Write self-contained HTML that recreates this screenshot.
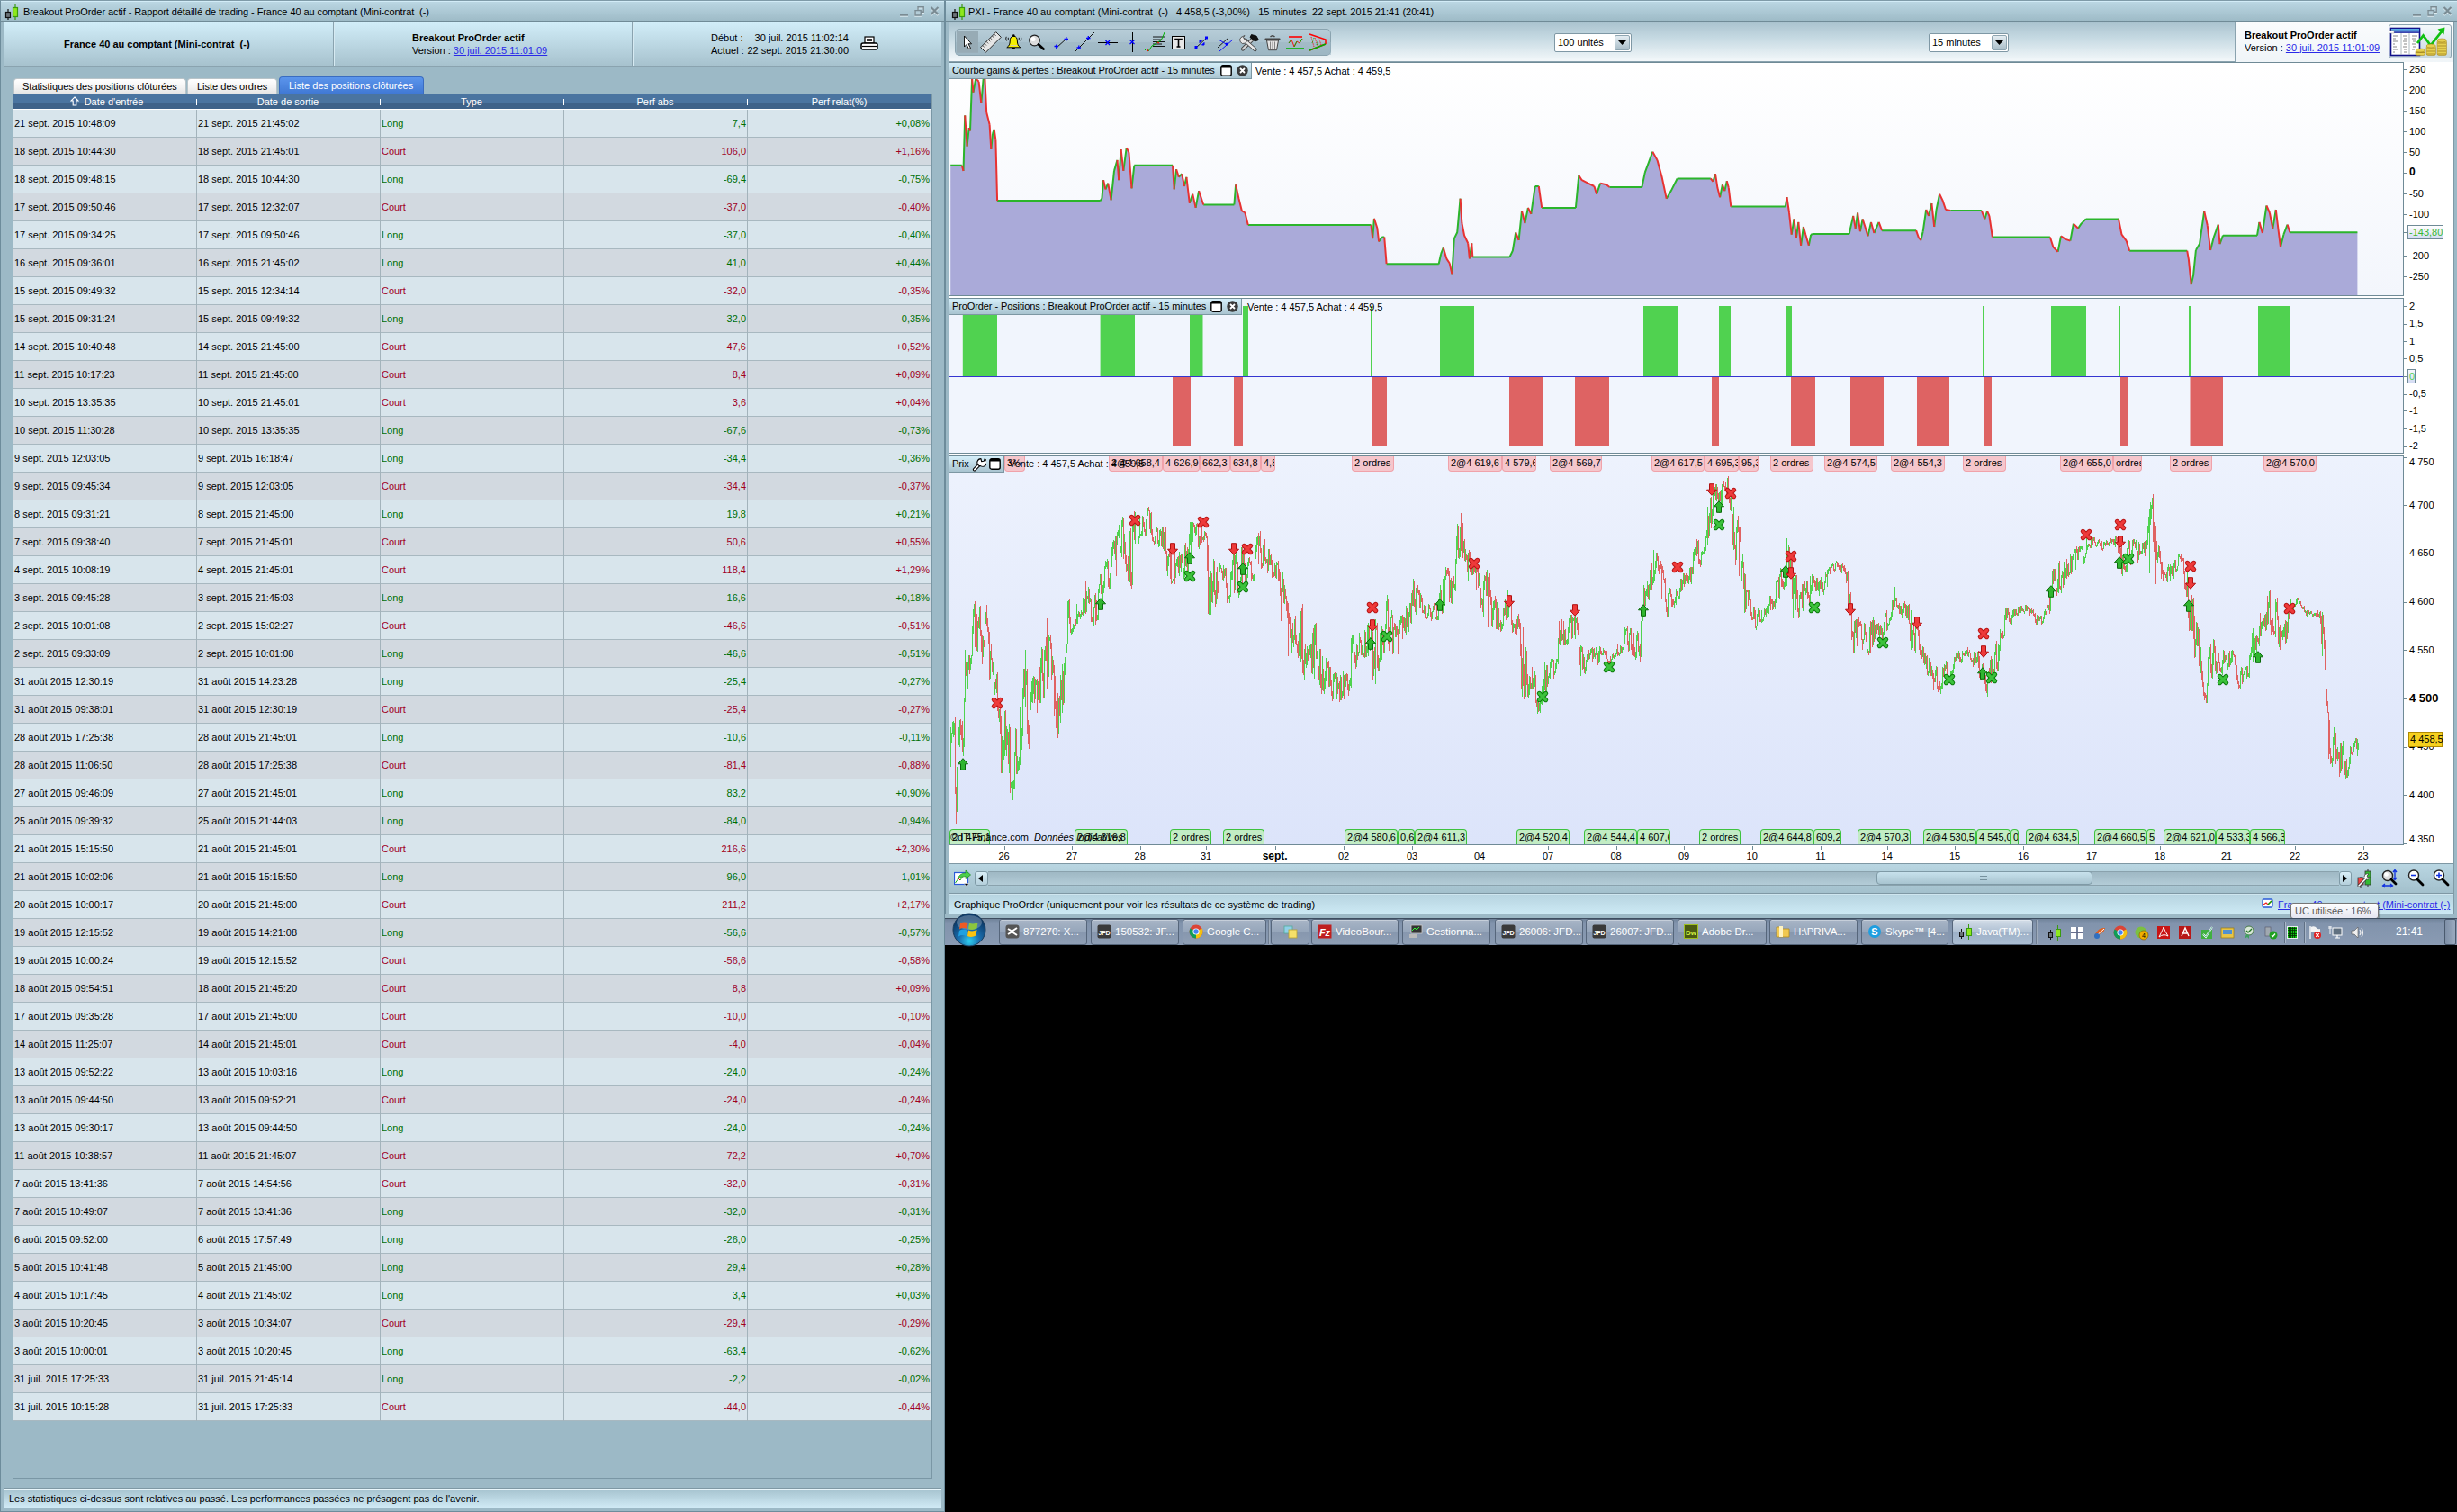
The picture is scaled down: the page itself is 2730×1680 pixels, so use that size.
<!DOCTYPE html><html><head><meta charset="utf-8"><style>*{margin:0;padding:0;box-sizing:border-box}html,body{width:2730px;height:1680px;overflow:hidden;background:#000}body{position:relative;font-family:"Liberation Sans",sans-serif;font-size:11px;color:#000}.a{position:absolute}.t{position:absolute;white-space:nowrap}.lk{color:#2a2ae8;text-decoration:underline}.tb{position:absolute;height:29px;top:1020px;border:1px solid #5d6c80;border-radius:3px;background:linear-gradient(#aab6c6,#8c9bb0 50%,#7f8fa6 51%,#8898ad);color:#fff;font-size:12px;line-height:27px;white-space:nowrap;overflow:hidden}</style></head><body>
<div class="a" style="left:0px;top:0px;width:1050px;height:1680px;background:#9cb9c6;border-left:1px solid #6d8c9b;border-right:1px solid #6d8c9b;border-top:1px solid #7f9ba8"></div>
<div class="a" style="left:1px;top:1px;width:1048px;height:22px;background:linear-gradient(#bcd8e4,#9ebbc7)"></div>
<div class="a" style="left:1px;top:1px;width:1048px;height:1px;background:#d2ecf7"></div>
<div class="a" style="left:1px;top:23px;width:1048px;height:1px;background:#708b97"></div>
<svg class="a" style="left:5px;top:5px" width="16" height="17" viewBox="0 0 16 17"><line x1="4" y1="5" x2="4" y2="17" stroke="#111" stroke-width="1.2"/><rect x="1.5" y="8.5" width="5" height="6" fill="#6b7378" stroke="#111" stroke-width="1.2"/><line x1="12" y1="0" x2="12" y2="17" stroke="#3a9a10" stroke-width="1.2"/><rect x="9.5" y="3.5" width="5" height="10" fill="#8ee81c" stroke="#3a9a10" stroke-width="1.2"/></svg>
<div class="t" style="left:26px;top:7px;line-height:13px;color:#000;letter-spacing:-0.08px">Breakout ProOrder actif - Rapport détaillé de trading - France 40 au comptant (Mini-contrat&nbsp; (-)</div>
<svg class="a" style="left:999px;top:6px" width="46" height="14" viewBox="0 0 46 14"><g transform="translate(0,1)" opacity="0.7"><rect x="1" y="9.5" width="9" height="2.2" fill="#f4fbfd"/><path d="M21 1.8 H27.2 V7.2 H21Z" fill="none" stroke="#f4fbfd" stroke-width="1.4"/><path d="M18 5.6 H24.2 V11 H18Z" fill="#b4cdd8" stroke="#f4fbfd" stroke-width="1.4"/><path d="M35.5 2 L43.5 10 M43.5 2 L35.5 10" stroke="#f4fbfd" stroke-width="2.2"/></g><rect x="1" y="9.5" width="9" height="2.2" fill="#7a8b93"/><path d="M21 1.8 H27.2 V7.2 H21Z" fill="none" stroke="#7a8b93" stroke-width="1.4"/><path d="M18 5.6 H24.2 V11 H18Z" fill="#b4cdd8" stroke="#7a8b93" stroke-width="1.4"/><path d="M35.5 2 L43.5 10 M43.5 2 L35.5 10" stroke="#7a8b93" stroke-width="2.2"/></svg>
<div class="a" style="left:4px;top:24px;width:1042px;height:50px;background:linear-gradient(#d2eef9,#a6c1cd)"></div>
<div class="a" style="left:4px;top:73px;width:1042px;height:1px;background:#8aa3af"></div>
<div class="a" style="left:4px;top:74px;width:1042px;height:1px;background:#d6eaf2"></div>
<div class="a" style="left:370px;top:24px;width:1px;height:49px;background:#8aa3af"></div>
<div class="a" style="left:371px;top:24px;width:1px;height:49px;background:#d6eaf2"></div>
<div class="a" style="left:702px;top:24px;width:1px;height:49px;background:#8aa3af"></div>
<div class="a" style="left:703px;top:24px;width:1px;height:49px;background:#d6eaf2"></div>
<div class="t" style="left:71px;top:43px;line-height:13px;font-weight:bold">France 40 au comptant (Mini-contrat&nbsp; (-)</div>
<div class="t" style="left:458px;top:36px;line-height:13px;font-weight:bold">Breakout ProOrder actif</div>
<div class="t" style="left:458px;top:50px;line-height:13px;">Version : <span class="lk">30 juil. 2015 11:01:09</span></div>
<div class="t" style="left:790px;top:36px;line-height:13px;">Début :</div>
<div class="t" style="right:1787px;top:36px;line-height:13px;">30 juil. 2015 11:02:14</div>
<div class="t" style="left:790px;top:50px;line-height:13px;">Actuel :</div>
<div class="t" style="right:1787px;top:50px;line-height:13px;">22 sept. 2015 21:30:00</div>
<svg class="a" style="left:956px;top:40px" width="20" height="18" viewBox="0 0 20 18"><rect x="5" y="1" width="10" height="7" fill="#fff" stroke="#000" stroke-width="1.2"/><path d="M7 3.5h6M7 5.5h6" stroke="#000" stroke-width="0.8"/><rect x="1" y="8" width="18" height="7" rx="2" fill="#fff" stroke="#000" stroke-width="1.5"/><path d="M2 11.5h16" stroke="#000" stroke-width="1.2"/></svg>
<div class="a" style="left:15px;top:87px;width:192px;height:18px;background:linear-gradient(#ffffff,#f4f4f4 50%,#e2e2e2);border:1px solid #b9c4c9;border-bottom:none;border-radius:4px 4px 0 0"></div>
<div class="t" style="left:25px;top:90px;line-height:13px;">Statistiques des positions clôturées</div>
<div class="a" style="left:208px;top:87px;width:100px;height:18px;background:linear-gradient(#ffffff,#f4f4f4 50%,#e2e2e2);border:1px solid #b9c4c9;border-bottom:none;border-radius:4px 4px 0 0"></div>
<div class="t" style="left:219px;top:90px;line-height:13px;">Liste des ordres</div>
<div class="a" style="left:310px;top:85px;width:161px;height:20px;background:linear-gradient(#5b95ec,#3f77d3);border:1px solid #3a6cc0;border-bottom:none;border-radius:4px 4px 0 0"></div>
<div class="t" style="left:321px;top:89px;line-height:13px;color:#fff">Liste des positions clôturées</div>
<div class="a" style="left:14px;top:105px;width:1022px;height:1538px;border:1px solid #7a97a5;background:#9cb9c6"></div>
<div class="a" style="left:15px;top:105px;width:1020px;height:9px;background:#4a74a0"></div>
<div class="a" style="left:15px;top:114px;width:1020px;height:7px;background:#3e6289"></div>
<div class="a" style="left:15px;top:121px;width:1020px;height:1px;background:#fff"></div>
<div class="t" style="left:26.5px;width:200px;text-align:center;top:107px;line-height:13px;color:#fff">Date d'entrée</div>
<div class="t" style="left:220.0px;width:200px;text-align:center;top:107px;line-height:13px;color:#fff">Date de sortie</div>
<div class="t" style="left:424.0px;width:200px;text-align:center;top:107px;line-height:13px;color:#fff">Type</div>
<div class="t" style="left:628.0px;width:200px;text-align:center;top:107px;line-height:13px;color:#fff">Perf abs</div>
<div class="t" style="left:832.5px;width:200px;text-align:center;top:107px;line-height:13px;color:#fff">Perf relat(%)</div>
<div class="a" style="left:218px;top:110px;width:1px;height:7px;background:#fff"></div>
<div class="a" style="left:422px;top:110px;width:1px;height:7px;background:#fff"></div>
<div class="a" style="left:626px;top:110px;width:1px;height:7px;background:#fff"></div>
<div class="a" style="left:830px;top:110px;width:1px;height:7px;background:#fff"></div>
<svg class="a" style="left:78px;top:107px" width="10" height="11" viewBox="0 0 10 11"><path d="M5 1 L9 5 H6.8 V10 H3.2 V5 H1 Z" fill="#44699a" stroke="#fff" stroke-width="1.1"/></svg>
<div class="a" style="left:15px;top:122px;width:1020px;height:30px;background:#d8e5ec"></div>
<div class="a" style="left:15px;top:152px;width:1020px;height:1px;background:#a8b8c0"></div>
<div class="t" style="left:16px;top:122px;line-height:30px;color:#000">21 sept. 2015 10:48:09</div>
<div class="t" style="left:220px;top:122px;line-height:30px;color:#000">21 sept. 2015 21:45:02</div>
<div class="t" style="left:424px;top:122px;line-height:30px;color:#006e00">Long</div>
<div class="t" style="right:1901px;top:122px;line-height:30px;color:#006e00">7,4</div>
<div class="t" style="right:1697px;top:122px;line-height:30px;color:#006e00">+0,08%</div>
<div class="a" style="left:15px;top:153px;width:1020px;height:30px;background:#d2d9e0"></div>
<div class="a" style="left:15px;top:183px;width:1020px;height:1px;background:#a8b8c0"></div>
<div class="t" style="left:16px;top:153px;line-height:30px;color:#000">18 sept. 2015 10:44:30</div>
<div class="t" style="left:220px;top:153px;line-height:30px;color:#000">18 sept. 2015 21:45:01</div>
<div class="t" style="left:424px;top:153px;line-height:30px;color:#a0001c">Court</div>
<div class="t" style="right:1901px;top:153px;line-height:30px;color:#a0001c">106,0</div>
<div class="t" style="right:1697px;top:153px;line-height:30px;color:#a0001c">+1,16%</div>
<div class="a" style="left:15px;top:184px;width:1020px;height:30px;background:#d8e5ec"></div>
<div class="a" style="left:15px;top:214px;width:1020px;height:1px;background:#a8b8c0"></div>
<div class="t" style="left:16px;top:184px;line-height:30px;color:#000">18 sept. 2015 09:48:15</div>
<div class="t" style="left:220px;top:184px;line-height:30px;color:#000">18 sept. 2015 10:44:30</div>
<div class="t" style="left:424px;top:184px;line-height:30px;color:#006e00">Long</div>
<div class="t" style="right:1901px;top:184px;line-height:30px;color:#006e00">-69,4</div>
<div class="t" style="right:1697px;top:184px;line-height:30px;color:#006e00">-0,75%</div>
<div class="a" style="left:15px;top:215px;width:1020px;height:30px;background:#d2d9e0"></div>
<div class="a" style="left:15px;top:245px;width:1020px;height:1px;background:#a8b8c0"></div>
<div class="t" style="left:16px;top:215px;line-height:30px;color:#000">17 sept. 2015 09:50:46</div>
<div class="t" style="left:220px;top:215px;line-height:30px;color:#000">17 sept. 2015 12:32:07</div>
<div class="t" style="left:424px;top:215px;line-height:30px;color:#a0001c">Court</div>
<div class="t" style="right:1901px;top:215px;line-height:30px;color:#a0001c">-37,0</div>
<div class="t" style="right:1697px;top:215px;line-height:30px;color:#a0001c">-0,40%</div>
<div class="a" style="left:15px;top:246px;width:1020px;height:30px;background:#d8e5ec"></div>
<div class="a" style="left:15px;top:276px;width:1020px;height:1px;background:#a8b8c0"></div>
<div class="t" style="left:16px;top:246px;line-height:30px;color:#000">17 sept. 2015 09:34:25</div>
<div class="t" style="left:220px;top:246px;line-height:30px;color:#000">17 sept. 2015 09:50:46</div>
<div class="t" style="left:424px;top:246px;line-height:30px;color:#006e00">Long</div>
<div class="t" style="right:1901px;top:246px;line-height:30px;color:#006e00">-37,0</div>
<div class="t" style="right:1697px;top:246px;line-height:30px;color:#006e00">-0,40%</div>
<div class="a" style="left:15px;top:277px;width:1020px;height:30px;background:#d2d9e0"></div>
<div class="a" style="left:15px;top:307px;width:1020px;height:1px;background:#a8b8c0"></div>
<div class="t" style="left:16px;top:277px;line-height:30px;color:#000">16 sept. 2015 09:36:01</div>
<div class="t" style="left:220px;top:277px;line-height:30px;color:#000">16 sept. 2015 21:45:02</div>
<div class="t" style="left:424px;top:277px;line-height:30px;color:#006e00">Long</div>
<div class="t" style="right:1901px;top:277px;line-height:30px;color:#006e00">41,0</div>
<div class="t" style="right:1697px;top:277px;line-height:30px;color:#006e00">+0,44%</div>
<div class="a" style="left:15px;top:308px;width:1020px;height:30px;background:#d8e5ec"></div>
<div class="a" style="left:15px;top:338px;width:1020px;height:1px;background:#a8b8c0"></div>
<div class="t" style="left:16px;top:308px;line-height:30px;color:#000">15 sept. 2015 09:49:32</div>
<div class="t" style="left:220px;top:308px;line-height:30px;color:#000">15 sept. 2015 12:34:14</div>
<div class="t" style="left:424px;top:308px;line-height:30px;color:#a0001c">Court</div>
<div class="t" style="right:1901px;top:308px;line-height:30px;color:#a0001c">-32,0</div>
<div class="t" style="right:1697px;top:308px;line-height:30px;color:#a0001c">-0,35%</div>
<div class="a" style="left:15px;top:339px;width:1020px;height:30px;background:#d2d9e0"></div>
<div class="a" style="left:15px;top:369px;width:1020px;height:1px;background:#a8b8c0"></div>
<div class="t" style="left:16px;top:339px;line-height:30px;color:#000">15 sept. 2015 09:31:24</div>
<div class="t" style="left:220px;top:339px;line-height:30px;color:#000">15 sept. 2015 09:49:32</div>
<div class="t" style="left:424px;top:339px;line-height:30px;color:#006e00">Long</div>
<div class="t" style="right:1901px;top:339px;line-height:30px;color:#006e00">-32,0</div>
<div class="t" style="right:1697px;top:339px;line-height:30px;color:#006e00">-0,35%</div>
<div class="a" style="left:15px;top:370px;width:1020px;height:30px;background:#d8e5ec"></div>
<div class="a" style="left:15px;top:400px;width:1020px;height:1px;background:#a8b8c0"></div>
<div class="t" style="left:16px;top:370px;line-height:30px;color:#000">14 sept. 2015 10:40:48</div>
<div class="t" style="left:220px;top:370px;line-height:30px;color:#000">14 sept. 2015 21:45:00</div>
<div class="t" style="left:424px;top:370px;line-height:30px;color:#a0001c">Court</div>
<div class="t" style="right:1901px;top:370px;line-height:30px;color:#a0001c">47,6</div>
<div class="t" style="right:1697px;top:370px;line-height:30px;color:#a0001c">+0,52%</div>
<div class="a" style="left:15px;top:401px;width:1020px;height:30px;background:#d2d9e0"></div>
<div class="a" style="left:15px;top:431px;width:1020px;height:1px;background:#a8b8c0"></div>
<div class="t" style="left:16px;top:401px;line-height:30px;color:#000">11 sept. 2015 10:17:23</div>
<div class="t" style="left:220px;top:401px;line-height:30px;color:#000">11 sept. 2015 21:45:00</div>
<div class="t" style="left:424px;top:401px;line-height:30px;color:#a0001c">Court</div>
<div class="t" style="right:1901px;top:401px;line-height:30px;color:#a0001c">8,4</div>
<div class="t" style="right:1697px;top:401px;line-height:30px;color:#a0001c">+0,09%</div>
<div class="a" style="left:15px;top:432px;width:1020px;height:30px;background:#d8e5ec"></div>
<div class="a" style="left:15px;top:462px;width:1020px;height:1px;background:#a8b8c0"></div>
<div class="t" style="left:16px;top:432px;line-height:30px;color:#000">10 sept. 2015 13:35:35</div>
<div class="t" style="left:220px;top:432px;line-height:30px;color:#000">10 sept. 2015 21:45:01</div>
<div class="t" style="left:424px;top:432px;line-height:30px;color:#a0001c">Court</div>
<div class="t" style="right:1901px;top:432px;line-height:30px;color:#a0001c">3,6</div>
<div class="t" style="right:1697px;top:432px;line-height:30px;color:#a0001c">+0,04%</div>
<div class="a" style="left:15px;top:463px;width:1020px;height:30px;background:#d2d9e0"></div>
<div class="a" style="left:15px;top:493px;width:1020px;height:1px;background:#a8b8c0"></div>
<div class="t" style="left:16px;top:463px;line-height:30px;color:#000">10 sept. 2015 11:30:28</div>
<div class="t" style="left:220px;top:463px;line-height:30px;color:#000">10 sept. 2015 13:35:35</div>
<div class="t" style="left:424px;top:463px;line-height:30px;color:#006e00">Long</div>
<div class="t" style="right:1901px;top:463px;line-height:30px;color:#006e00">-67,6</div>
<div class="t" style="right:1697px;top:463px;line-height:30px;color:#006e00">-0,73%</div>
<div class="a" style="left:15px;top:494px;width:1020px;height:30px;background:#d8e5ec"></div>
<div class="a" style="left:15px;top:524px;width:1020px;height:1px;background:#a8b8c0"></div>
<div class="t" style="left:16px;top:494px;line-height:30px;color:#000">9 sept. 2015 12:03:05</div>
<div class="t" style="left:220px;top:494px;line-height:30px;color:#000">9 sept. 2015 16:18:47</div>
<div class="t" style="left:424px;top:494px;line-height:30px;color:#006e00">Long</div>
<div class="t" style="right:1901px;top:494px;line-height:30px;color:#006e00">-34,4</div>
<div class="t" style="right:1697px;top:494px;line-height:30px;color:#006e00">-0,36%</div>
<div class="a" style="left:15px;top:525px;width:1020px;height:30px;background:#d2d9e0"></div>
<div class="a" style="left:15px;top:555px;width:1020px;height:1px;background:#a8b8c0"></div>
<div class="t" style="left:16px;top:525px;line-height:30px;color:#000">9 sept. 2015 09:45:34</div>
<div class="t" style="left:220px;top:525px;line-height:30px;color:#000">9 sept. 2015 12:03:05</div>
<div class="t" style="left:424px;top:525px;line-height:30px;color:#a0001c">Court</div>
<div class="t" style="right:1901px;top:525px;line-height:30px;color:#a0001c">-34,4</div>
<div class="t" style="right:1697px;top:525px;line-height:30px;color:#a0001c">-0,37%</div>
<div class="a" style="left:15px;top:556px;width:1020px;height:30px;background:#d8e5ec"></div>
<div class="a" style="left:15px;top:586px;width:1020px;height:1px;background:#a8b8c0"></div>
<div class="t" style="left:16px;top:556px;line-height:30px;color:#000">8 sept. 2015 09:31:21</div>
<div class="t" style="left:220px;top:556px;line-height:30px;color:#000">8 sept. 2015 21:45:00</div>
<div class="t" style="left:424px;top:556px;line-height:30px;color:#006e00">Long</div>
<div class="t" style="right:1901px;top:556px;line-height:30px;color:#006e00">19,8</div>
<div class="t" style="right:1697px;top:556px;line-height:30px;color:#006e00">+0,21%</div>
<div class="a" style="left:15px;top:587px;width:1020px;height:30px;background:#d2d9e0"></div>
<div class="a" style="left:15px;top:617px;width:1020px;height:1px;background:#a8b8c0"></div>
<div class="t" style="left:16px;top:587px;line-height:30px;color:#000">7 sept. 2015 09:38:40</div>
<div class="t" style="left:220px;top:587px;line-height:30px;color:#000">7 sept. 2015 21:45:01</div>
<div class="t" style="left:424px;top:587px;line-height:30px;color:#a0001c">Court</div>
<div class="t" style="right:1901px;top:587px;line-height:30px;color:#a0001c">50,6</div>
<div class="t" style="right:1697px;top:587px;line-height:30px;color:#a0001c">+0,55%</div>
<div class="a" style="left:15px;top:618px;width:1020px;height:30px;background:#d8e5ec"></div>
<div class="a" style="left:15px;top:648px;width:1020px;height:1px;background:#a8b8c0"></div>
<div class="t" style="left:16px;top:618px;line-height:30px;color:#000">4 sept. 2015 10:08:19</div>
<div class="t" style="left:220px;top:618px;line-height:30px;color:#000">4 sept. 2015 21:45:01</div>
<div class="t" style="left:424px;top:618px;line-height:30px;color:#a0001c">Court</div>
<div class="t" style="right:1901px;top:618px;line-height:30px;color:#a0001c">118,4</div>
<div class="t" style="right:1697px;top:618px;line-height:30px;color:#a0001c">+1,29%</div>
<div class="a" style="left:15px;top:649px;width:1020px;height:30px;background:#d2d9e0"></div>
<div class="a" style="left:15px;top:679px;width:1020px;height:1px;background:#a8b8c0"></div>
<div class="t" style="left:16px;top:649px;line-height:30px;color:#000">3 sept. 2015 09:45:28</div>
<div class="t" style="left:220px;top:649px;line-height:30px;color:#000">3 sept. 2015 21:45:03</div>
<div class="t" style="left:424px;top:649px;line-height:30px;color:#006e00">Long</div>
<div class="t" style="right:1901px;top:649px;line-height:30px;color:#006e00">16,6</div>
<div class="t" style="right:1697px;top:649px;line-height:30px;color:#006e00">+0,18%</div>
<div class="a" style="left:15px;top:680px;width:1020px;height:30px;background:#d8e5ec"></div>
<div class="a" style="left:15px;top:710px;width:1020px;height:1px;background:#a8b8c0"></div>
<div class="t" style="left:16px;top:680px;line-height:30px;color:#000">2 sept. 2015 10:01:08</div>
<div class="t" style="left:220px;top:680px;line-height:30px;color:#000">2 sept. 2015 15:02:27</div>
<div class="t" style="left:424px;top:680px;line-height:30px;color:#a0001c">Court</div>
<div class="t" style="right:1901px;top:680px;line-height:30px;color:#a0001c">-46,6</div>
<div class="t" style="right:1697px;top:680px;line-height:30px;color:#a0001c">-0,51%</div>
<div class="a" style="left:15px;top:711px;width:1020px;height:30px;background:#d2d9e0"></div>
<div class="a" style="left:15px;top:741px;width:1020px;height:1px;background:#a8b8c0"></div>
<div class="t" style="left:16px;top:711px;line-height:30px;color:#000">2 sept. 2015 09:33:09</div>
<div class="t" style="left:220px;top:711px;line-height:30px;color:#000">2 sept. 2015 10:01:08</div>
<div class="t" style="left:424px;top:711px;line-height:30px;color:#006e00">Long</div>
<div class="t" style="right:1901px;top:711px;line-height:30px;color:#006e00">-46,6</div>
<div class="t" style="right:1697px;top:711px;line-height:30px;color:#006e00">-0,51%</div>
<div class="a" style="left:15px;top:742px;width:1020px;height:30px;background:#d8e5ec"></div>
<div class="a" style="left:15px;top:772px;width:1020px;height:1px;background:#a8b8c0"></div>
<div class="t" style="left:16px;top:742px;line-height:30px;color:#000">31 août 2015 12:30:19</div>
<div class="t" style="left:220px;top:742px;line-height:30px;color:#000">31 août 2015 14:23:28</div>
<div class="t" style="left:424px;top:742px;line-height:30px;color:#006e00">Long</div>
<div class="t" style="right:1901px;top:742px;line-height:30px;color:#006e00">-25,4</div>
<div class="t" style="right:1697px;top:742px;line-height:30px;color:#006e00">-0,27%</div>
<div class="a" style="left:15px;top:773px;width:1020px;height:30px;background:#d2d9e0"></div>
<div class="a" style="left:15px;top:803px;width:1020px;height:1px;background:#a8b8c0"></div>
<div class="t" style="left:16px;top:773px;line-height:30px;color:#000">31 août 2015 09:38:01</div>
<div class="t" style="left:220px;top:773px;line-height:30px;color:#000">31 août 2015 12:30:19</div>
<div class="t" style="left:424px;top:773px;line-height:30px;color:#a0001c">Court</div>
<div class="t" style="right:1901px;top:773px;line-height:30px;color:#a0001c">-25,4</div>
<div class="t" style="right:1697px;top:773px;line-height:30px;color:#a0001c">-0,27%</div>
<div class="a" style="left:15px;top:804px;width:1020px;height:30px;background:#d8e5ec"></div>
<div class="a" style="left:15px;top:834px;width:1020px;height:1px;background:#a8b8c0"></div>
<div class="t" style="left:16px;top:804px;line-height:30px;color:#000">28 août 2015 17:25:38</div>
<div class="t" style="left:220px;top:804px;line-height:30px;color:#000">28 août 2015 21:45:01</div>
<div class="t" style="left:424px;top:804px;line-height:30px;color:#006e00">Long</div>
<div class="t" style="right:1901px;top:804px;line-height:30px;color:#006e00">-10,6</div>
<div class="t" style="right:1697px;top:804px;line-height:30px;color:#006e00">-0,11%</div>
<div class="a" style="left:15px;top:835px;width:1020px;height:30px;background:#d2d9e0"></div>
<div class="a" style="left:15px;top:865px;width:1020px;height:1px;background:#a8b8c0"></div>
<div class="t" style="left:16px;top:835px;line-height:30px;color:#000">28 août 2015 11:06:50</div>
<div class="t" style="left:220px;top:835px;line-height:30px;color:#000">28 août 2015 17:25:38</div>
<div class="t" style="left:424px;top:835px;line-height:30px;color:#a0001c">Court</div>
<div class="t" style="right:1901px;top:835px;line-height:30px;color:#a0001c">-81,4</div>
<div class="t" style="right:1697px;top:835px;line-height:30px;color:#a0001c">-0,88%</div>
<div class="a" style="left:15px;top:866px;width:1020px;height:30px;background:#d8e5ec"></div>
<div class="a" style="left:15px;top:896px;width:1020px;height:1px;background:#a8b8c0"></div>
<div class="t" style="left:16px;top:866px;line-height:30px;color:#000">27 août 2015 09:46:09</div>
<div class="t" style="left:220px;top:866px;line-height:30px;color:#000">27 août 2015 21:45:01</div>
<div class="t" style="left:424px;top:866px;line-height:30px;color:#006e00">Long</div>
<div class="t" style="right:1901px;top:866px;line-height:30px;color:#006e00">83,2</div>
<div class="t" style="right:1697px;top:866px;line-height:30px;color:#006e00">+0,90%</div>
<div class="a" style="left:15px;top:897px;width:1020px;height:30px;background:#d2d9e0"></div>
<div class="a" style="left:15px;top:927px;width:1020px;height:1px;background:#a8b8c0"></div>
<div class="t" style="left:16px;top:897px;line-height:30px;color:#000">25 août 2015 09:39:32</div>
<div class="t" style="left:220px;top:897px;line-height:30px;color:#000">25 août 2015 21:44:03</div>
<div class="t" style="left:424px;top:897px;line-height:30px;color:#006e00">Long</div>
<div class="t" style="right:1901px;top:897px;line-height:30px;color:#006e00">-84,0</div>
<div class="t" style="right:1697px;top:897px;line-height:30px;color:#006e00">-0,94%</div>
<div class="a" style="left:15px;top:928px;width:1020px;height:30px;background:#d8e5ec"></div>
<div class="a" style="left:15px;top:958px;width:1020px;height:1px;background:#a8b8c0"></div>
<div class="t" style="left:16px;top:928px;line-height:30px;color:#000">21 août 2015 15:15:50</div>
<div class="t" style="left:220px;top:928px;line-height:30px;color:#000">21 août 2015 21:45:01</div>
<div class="t" style="left:424px;top:928px;line-height:30px;color:#a0001c">Court</div>
<div class="t" style="right:1901px;top:928px;line-height:30px;color:#a0001c">216,6</div>
<div class="t" style="right:1697px;top:928px;line-height:30px;color:#a0001c">+2,30%</div>
<div class="a" style="left:15px;top:959px;width:1020px;height:30px;background:#d2d9e0"></div>
<div class="a" style="left:15px;top:989px;width:1020px;height:1px;background:#a8b8c0"></div>
<div class="t" style="left:16px;top:959px;line-height:30px;color:#000">21 août 2015 10:02:06</div>
<div class="t" style="left:220px;top:959px;line-height:30px;color:#000">21 août 2015 15:15:50</div>
<div class="t" style="left:424px;top:959px;line-height:30px;color:#006e00">Long</div>
<div class="t" style="right:1901px;top:959px;line-height:30px;color:#006e00">-96,0</div>
<div class="t" style="right:1697px;top:959px;line-height:30px;color:#006e00">-1,01%</div>
<div class="a" style="left:15px;top:990px;width:1020px;height:30px;background:#d8e5ec"></div>
<div class="a" style="left:15px;top:1020px;width:1020px;height:1px;background:#a8b8c0"></div>
<div class="t" style="left:16px;top:990px;line-height:30px;color:#000">20 août 2015 10:00:17</div>
<div class="t" style="left:220px;top:990px;line-height:30px;color:#000">20 août 2015 21:45:00</div>
<div class="t" style="left:424px;top:990px;line-height:30px;color:#a0001c">Court</div>
<div class="t" style="right:1901px;top:990px;line-height:30px;color:#a0001c">211,2</div>
<div class="t" style="right:1697px;top:990px;line-height:30px;color:#a0001c">+2,17%</div>
<div class="a" style="left:15px;top:1021px;width:1020px;height:30px;background:#d2d9e0"></div>
<div class="a" style="left:15px;top:1051px;width:1020px;height:1px;background:#a8b8c0"></div>
<div class="t" style="left:16px;top:1021px;line-height:30px;color:#000">19 août 2015 12:15:52</div>
<div class="t" style="left:220px;top:1021px;line-height:30px;color:#000">19 août 2015 14:21:08</div>
<div class="t" style="left:424px;top:1021px;line-height:30px;color:#006e00">Long</div>
<div class="t" style="right:1901px;top:1021px;line-height:30px;color:#006e00">-56,6</div>
<div class="t" style="right:1697px;top:1021px;line-height:30px;color:#006e00">-0,57%</div>
<div class="a" style="left:15px;top:1052px;width:1020px;height:30px;background:#d8e5ec"></div>
<div class="a" style="left:15px;top:1082px;width:1020px;height:1px;background:#a8b8c0"></div>
<div class="t" style="left:16px;top:1052px;line-height:30px;color:#000">19 août 2015 10:00:24</div>
<div class="t" style="left:220px;top:1052px;line-height:30px;color:#000">19 août 2015 12:15:52</div>
<div class="t" style="left:424px;top:1052px;line-height:30px;color:#a0001c">Court</div>
<div class="t" style="right:1901px;top:1052px;line-height:30px;color:#a0001c">-56,6</div>
<div class="t" style="right:1697px;top:1052px;line-height:30px;color:#a0001c">-0,58%</div>
<div class="a" style="left:15px;top:1083px;width:1020px;height:30px;background:#d2d9e0"></div>
<div class="a" style="left:15px;top:1113px;width:1020px;height:1px;background:#a8b8c0"></div>
<div class="t" style="left:16px;top:1083px;line-height:30px;color:#000">18 août 2015 09:54:51</div>
<div class="t" style="left:220px;top:1083px;line-height:30px;color:#000">18 août 2015 21:45:20</div>
<div class="t" style="left:424px;top:1083px;line-height:30px;color:#a0001c">Court</div>
<div class="t" style="right:1901px;top:1083px;line-height:30px;color:#a0001c">8,8</div>
<div class="t" style="right:1697px;top:1083px;line-height:30px;color:#a0001c">+0,09%</div>
<div class="a" style="left:15px;top:1114px;width:1020px;height:30px;background:#d8e5ec"></div>
<div class="a" style="left:15px;top:1144px;width:1020px;height:1px;background:#a8b8c0"></div>
<div class="t" style="left:16px;top:1114px;line-height:30px;color:#000">17 août 2015 09:35:28</div>
<div class="t" style="left:220px;top:1114px;line-height:30px;color:#000">17 août 2015 21:45:00</div>
<div class="t" style="left:424px;top:1114px;line-height:30px;color:#a0001c">Court</div>
<div class="t" style="right:1901px;top:1114px;line-height:30px;color:#a0001c">-10,0</div>
<div class="t" style="right:1697px;top:1114px;line-height:30px;color:#a0001c">-0,10%</div>
<div class="a" style="left:15px;top:1145px;width:1020px;height:30px;background:#d2d9e0"></div>
<div class="a" style="left:15px;top:1175px;width:1020px;height:1px;background:#a8b8c0"></div>
<div class="t" style="left:16px;top:1145px;line-height:30px;color:#000">14 août 2015 11:25:07</div>
<div class="t" style="left:220px;top:1145px;line-height:30px;color:#000">14 août 2015 21:45:01</div>
<div class="t" style="left:424px;top:1145px;line-height:30px;color:#a0001c">Court</div>
<div class="t" style="right:1901px;top:1145px;line-height:30px;color:#a0001c">-4,0</div>
<div class="t" style="right:1697px;top:1145px;line-height:30px;color:#a0001c">-0,04%</div>
<div class="a" style="left:15px;top:1176px;width:1020px;height:30px;background:#d8e5ec"></div>
<div class="a" style="left:15px;top:1206px;width:1020px;height:1px;background:#a8b8c0"></div>
<div class="t" style="left:16px;top:1176px;line-height:30px;color:#000">13 août 2015 09:52:22</div>
<div class="t" style="left:220px;top:1176px;line-height:30px;color:#000">13 août 2015 10:03:16</div>
<div class="t" style="left:424px;top:1176px;line-height:30px;color:#006e00">Long</div>
<div class="t" style="right:1901px;top:1176px;line-height:30px;color:#006e00">-24,0</div>
<div class="t" style="right:1697px;top:1176px;line-height:30px;color:#006e00">-0,24%</div>
<div class="a" style="left:15px;top:1207px;width:1020px;height:30px;background:#d2d9e0"></div>
<div class="a" style="left:15px;top:1237px;width:1020px;height:1px;background:#a8b8c0"></div>
<div class="t" style="left:16px;top:1207px;line-height:30px;color:#000">13 août 2015 09:44:50</div>
<div class="t" style="left:220px;top:1207px;line-height:30px;color:#000">13 août 2015 09:52:21</div>
<div class="t" style="left:424px;top:1207px;line-height:30px;color:#a0001c">Court</div>
<div class="t" style="right:1901px;top:1207px;line-height:30px;color:#a0001c">-24,0</div>
<div class="t" style="right:1697px;top:1207px;line-height:30px;color:#a0001c">-0,24%</div>
<div class="a" style="left:15px;top:1238px;width:1020px;height:30px;background:#d8e5ec"></div>
<div class="a" style="left:15px;top:1268px;width:1020px;height:1px;background:#a8b8c0"></div>
<div class="t" style="left:16px;top:1238px;line-height:30px;color:#000">13 août 2015 09:30:17</div>
<div class="t" style="left:220px;top:1238px;line-height:30px;color:#000">13 août 2015 09:44:50</div>
<div class="t" style="left:424px;top:1238px;line-height:30px;color:#006e00">Long</div>
<div class="t" style="right:1901px;top:1238px;line-height:30px;color:#006e00">-24,0</div>
<div class="t" style="right:1697px;top:1238px;line-height:30px;color:#006e00">-0,24%</div>
<div class="a" style="left:15px;top:1269px;width:1020px;height:30px;background:#d2d9e0"></div>
<div class="a" style="left:15px;top:1299px;width:1020px;height:1px;background:#a8b8c0"></div>
<div class="t" style="left:16px;top:1269px;line-height:30px;color:#000">11 août 2015 10:38:57</div>
<div class="t" style="left:220px;top:1269px;line-height:30px;color:#000">11 août 2015 21:45:07</div>
<div class="t" style="left:424px;top:1269px;line-height:30px;color:#a0001c">Court</div>
<div class="t" style="right:1901px;top:1269px;line-height:30px;color:#a0001c">72,2</div>
<div class="t" style="right:1697px;top:1269px;line-height:30px;color:#a0001c">+0,70%</div>
<div class="a" style="left:15px;top:1300px;width:1020px;height:30px;background:#d8e5ec"></div>
<div class="a" style="left:15px;top:1330px;width:1020px;height:1px;background:#a8b8c0"></div>
<div class="t" style="left:16px;top:1300px;line-height:30px;color:#000">7 août 2015 13:41:36</div>
<div class="t" style="left:220px;top:1300px;line-height:30px;color:#000">7 août 2015 14:54:56</div>
<div class="t" style="left:424px;top:1300px;line-height:30px;color:#a0001c">Court</div>
<div class="t" style="right:1901px;top:1300px;line-height:30px;color:#a0001c">-32,0</div>
<div class="t" style="right:1697px;top:1300px;line-height:30px;color:#a0001c">-0,31%</div>
<div class="a" style="left:15px;top:1331px;width:1020px;height:30px;background:#d2d9e0"></div>
<div class="a" style="left:15px;top:1361px;width:1020px;height:1px;background:#a8b8c0"></div>
<div class="t" style="left:16px;top:1331px;line-height:30px;color:#000">7 août 2015 10:49:07</div>
<div class="t" style="left:220px;top:1331px;line-height:30px;color:#000">7 août 2015 13:41:36</div>
<div class="t" style="left:424px;top:1331px;line-height:30px;color:#006e00">Long</div>
<div class="t" style="right:1901px;top:1331px;line-height:30px;color:#006e00">-32,0</div>
<div class="t" style="right:1697px;top:1331px;line-height:30px;color:#006e00">-0,31%</div>
<div class="a" style="left:15px;top:1362px;width:1020px;height:30px;background:#d8e5ec"></div>
<div class="a" style="left:15px;top:1392px;width:1020px;height:1px;background:#a8b8c0"></div>
<div class="t" style="left:16px;top:1362px;line-height:30px;color:#000">6 août 2015 09:52:00</div>
<div class="t" style="left:220px;top:1362px;line-height:30px;color:#000">6 août 2015 17:57:49</div>
<div class="t" style="left:424px;top:1362px;line-height:30px;color:#006e00">Long</div>
<div class="t" style="right:1901px;top:1362px;line-height:30px;color:#006e00">-26,0</div>
<div class="t" style="right:1697px;top:1362px;line-height:30px;color:#006e00">-0,25%</div>
<div class="a" style="left:15px;top:1393px;width:1020px;height:30px;background:#d2d9e0"></div>
<div class="a" style="left:15px;top:1423px;width:1020px;height:1px;background:#a8b8c0"></div>
<div class="t" style="left:16px;top:1393px;line-height:30px;color:#000">5 août 2015 10:41:48</div>
<div class="t" style="left:220px;top:1393px;line-height:30px;color:#000">5 août 2015 21:45:00</div>
<div class="t" style="left:424px;top:1393px;line-height:30px;color:#006e00">Long</div>
<div class="t" style="right:1901px;top:1393px;line-height:30px;color:#006e00">29,4</div>
<div class="t" style="right:1697px;top:1393px;line-height:30px;color:#006e00">+0,28%</div>
<div class="a" style="left:15px;top:1424px;width:1020px;height:30px;background:#d8e5ec"></div>
<div class="a" style="left:15px;top:1454px;width:1020px;height:1px;background:#a8b8c0"></div>
<div class="t" style="left:16px;top:1424px;line-height:30px;color:#000">4 août 2015 10:17:45</div>
<div class="t" style="left:220px;top:1424px;line-height:30px;color:#000">4 août 2015 21:45:02</div>
<div class="t" style="left:424px;top:1424px;line-height:30px;color:#006e00">Long</div>
<div class="t" style="right:1901px;top:1424px;line-height:30px;color:#006e00">3,4</div>
<div class="t" style="right:1697px;top:1424px;line-height:30px;color:#006e00">+0,03%</div>
<div class="a" style="left:15px;top:1455px;width:1020px;height:30px;background:#d2d9e0"></div>
<div class="a" style="left:15px;top:1485px;width:1020px;height:1px;background:#a8b8c0"></div>
<div class="t" style="left:16px;top:1455px;line-height:30px;color:#000">3 août 2015 10:20:45</div>
<div class="t" style="left:220px;top:1455px;line-height:30px;color:#000">3 août 2015 10:34:07</div>
<div class="t" style="left:424px;top:1455px;line-height:30px;color:#a0001c">Court</div>
<div class="t" style="right:1901px;top:1455px;line-height:30px;color:#a0001c">-29,4</div>
<div class="t" style="right:1697px;top:1455px;line-height:30px;color:#a0001c">-0,29%</div>
<div class="a" style="left:15px;top:1486px;width:1020px;height:30px;background:#d8e5ec"></div>
<div class="a" style="left:15px;top:1516px;width:1020px;height:1px;background:#a8b8c0"></div>
<div class="t" style="left:16px;top:1486px;line-height:30px;color:#000">3 août 2015 10:00:01</div>
<div class="t" style="left:220px;top:1486px;line-height:30px;color:#000">3 août 2015 10:20:45</div>
<div class="t" style="left:424px;top:1486px;line-height:30px;color:#006e00">Long</div>
<div class="t" style="right:1901px;top:1486px;line-height:30px;color:#006e00">-63,4</div>
<div class="t" style="right:1697px;top:1486px;line-height:30px;color:#006e00">-0,62%</div>
<div class="a" style="left:15px;top:1517px;width:1020px;height:30px;background:#d2d9e0"></div>
<div class="a" style="left:15px;top:1547px;width:1020px;height:1px;background:#a8b8c0"></div>
<div class="t" style="left:16px;top:1517px;line-height:30px;color:#000">31 juil. 2015 17:25:33</div>
<div class="t" style="left:220px;top:1517px;line-height:30px;color:#000">31 juil. 2015 21:45:14</div>
<div class="t" style="left:424px;top:1517px;line-height:30px;color:#006e00">Long</div>
<div class="t" style="right:1901px;top:1517px;line-height:30px;color:#006e00">-2,2</div>
<div class="t" style="right:1697px;top:1517px;line-height:30px;color:#006e00">-0,02%</div>
<div class="a" style="left:15px;top:1548px;width:1020px;height:30px;background:#d8e5ec"></div>
<div class="a" style="left:15px;top:1578px;width:1020px;height:1px;background:#a8b8c0"></div>
<div class="t" style="left:16px;top:1548px;line-height:30px;color:#000">31 juil. 2015 10:15:28</div>
<div class="t" style="left:220px;top:1548px;line-height:30px;color:#000">31 juil. 2015 17:25:33</div>
<div class="t" style="left:424px;top:1548px;line-height:30px;color:#a0001c">Court</div>
<div class="t" style="right:1901px;top:1548px;line-height:30px;color:#a0001c">-44,0</div>
<div class="t" style="right:1697px;top:1548px;line-height:30px;color:#a0001c">-0,44%</div>
<div class="a" style="left:218px;top:122px;width:1px;height:1457px;background:#a3b3bb"></div>
<div class="a" style="left:422px;top:122px;width:1px;height:1457px;background:#a3b3bb"></div>
<div class="a" style="left:626px;top:122px;width:1px;height:1457px;background:#a3b3bb"></div>
<div class="a" style="left:830px;top:122px;width:1px;height:1457px;background:#a3b3bb"></div>
<div class="a" style="left:4px;top:1653px;width:1042px;height:1px;background:#7f98a4"></div>
<div class="a" style="left:4px;top:1654px;width:1042px;height:1px;background:#e8f6fb"></div>
<div class="a" style="left:4px;top:1655px;width:1042px;height:21px;background:linear-gradient(#a6c3cf,#d2ecf7)"></div>
<div class="a" style="left:0px;top:1679px;width:1050px;height:1px;background:#6d8c9b"></div>
<div class="t" style="left:10px;top:1659px;line-height:13px;">Les statistiques ci-dessus sont relatives au passé. Les performances passées ne présagent pas de l'avenir.</div>
<div class="a" style="left:1050px;top:0px;width:1680px;height:1050px;background:#9cb9c6;border-left:1px solid #6d8c9b;border-top:1px solid #7f9ba8"></div>
<div class="a" style="left:1051px;top:1px;width:1679px;height:22px;background:linear-gradient(#bcd8e4,#9ebbc7)"></div>
<div class="a" style="left:1051px;top:1px;width:1679px;height:1px;background:#d2ecf7"></div>
<div class="a" style="left:1051px;top:23px;width:1679px;height:1px;background:#708b97"></div>
<svg class="a" style="left:1057px;top:5px" width="16" height="17" viewBox="0 0 16 17"><line x1="4" y1="5" x2="4" y2="17" stroke="#111" stroke-width="1.2"/><rect x="1.5" y="8.5" width="5" height="6" fill="#6b7378" stroke="#111" stroke-width="1.2"/><line x1="12" y1="0" x2="12" y2="17" stroke="#3a9a10" stroke-width="1.2"/><rect x="9.5" y="3.5" width="5" height="10" fill="#8ee81c" stroke="#3a9a10" stroke-width="1.2"/></svg>
<div class="t" style="left:1076px;top:7px;line-height:13px;">PXI - France 40 au comptant (Mini-contrat&nbsp; (-)&nbsp;&nbsp; 4 458,5 (-3,00%)&nbsp;&nbsp; 15 minutes&nbsp; 22 sept. 2015 21:41 (20:41)</div>
<svg class="a" style="left:2680px;top:6px" width="46" height="14" viewBox="0 0 46 14"><g transform="translate(0,1)" opacity="0.7"><rect x="1" y="9.5" width="9" height="2.2" fill="#f4fbfd"/><path d="M21 1.8 H27.2 V7.2 H21Z" fill="none" stroke="#f4fbfd" stroke-width="1.4"/><path d="M18 5.6 H24.2 V11 H18Z" fill="#b4cdd8" stroke="#f4fbfd" stroke-width="1.4"/><path d="M35.5 2 L43.5 10 M43.5 2 L35.5 10" stroke="#f4fbfd" stroke-width="2.2"/></g><rect x="1" y="9.5" width="9" height="2.2" fill="#7a8b93"/><path d="M21 1.8 H27.2 V7.2 H21Z" fill="none" stroke="#7a8b93" stroke-width="1.4"/><path d="M18 5.6 H24.2 V11 H18Z" fill="#b4cdd8" stroke="#7a8b93" stroke-width="1.4"/><path d="M35.5 2 L43.5 10 M43.5 2 L35.5 10" stroke="#7a8b93" stroke-width="2.2"/></svg>
<div class="a" style="left:1054px;top:24px;width:1676px;height:45px;background:linear-gradient(#a9c2ce,#c5d9e2 40%,#f5f9fb)"></div>
<div class="a" style="left:1054px;top:68px;width:1429px;height:1px;background:#8aa3af"></div>
<div class="a" style="left:1061px;top:32px;width:418px;height:30px;border:1px solid #8aa3af;border-radius:5px;background:linear-gradient(#b7cdd8,#a9c1cd 55%,#9fb8c4)"></div>
<div class="a" style="left:1063px;top:34px;width:24px;height:25px;background:#97abb5"></div>
<svg class="a" style="left:1058px;top:28px" width="426" height="38" viewBox="0 0 426 38"><rect x="4" y="19" width="417" height="14" fill="#9db7c3" opacity="0.55"/><rect x="5" y="6.5" width="24" height="24" fill="#97abb5"/><path d="M13.5 12 L13.5 24 L16 21.5 L18.5 26.5 L20.5 25.5 L18 20.8 L21.5 20.8 Z" fill="#fff" stroke="#000" stroke-width="0.9"/><g transform="translate(43,19) rotate(-45)"><rect x="-12" y="-4" width="24" height="8" fill="#e6e6e6" stroke="#222" stroke-width="0.9"/><path d="M-9 -4v3M-6 -4v3M-3 -4v3M0 -4v3M3 -4v3M6 -4v3M9 -4v3" stroke="#222" stroke-width="0.7"/></g><path d='M68.3 12.2 C65.2 12.2 64.2 14.8 64.2 18 C64.2 21 63.2 23 60.8 24.8 H75.8 C73.4 23 72.4 21 72.4 18 C72.4 14.8 71.4 12.2 68.3 12.2Z' fill='#f6f000' stroke='#000' stroke-width='1'/><path d='M64.5 22.5 H72.1' stroke='#d8d0a0' stroke-width='1'/><circle cx='68.3' cy='11.6' r='1.3' fill='#000'/><path d='M66.8 25 H69.8 V26.3 H66.8Z' fill='#000'/><path d='M60.2 12.8 Q59 15 60.6 17.5 M62.4 13.8 Q61.8 15 62.8 16.6 M76.4 12.8 Q77.6 15 76 17.5 M74.2 13.8 Q74.8 15 73.8 16.6' stroke='#000' stroke-width='0.9' fill='none'/><circle cx="91.5" cy="17" r="5.8" fill="#ddd" stroke="#222" stroke-width="1.2"/><circle cx="90" cy="15.5" r="2.5" fill="#fff"/><path d="M96 21.5 L101.5 26.5" stroke="#000" stroke-width="2.8" stroke-linecap="round"/><path d="M116 25 L127 15" stroke="#000" stroke-width="0.9"/><path d="M113.5 23.5h4.5M115.8 21.5v4.5M124.5 15.5h4.5M126.8 13v4.5" stroke="#0000ff" stroke-width="1.3"/><path d="M136 30 L158 8" stroke="#000" stroke-width="0.9"/><path d="M138.5 25h4.5M140.8 22.5v4.5M149 14.5h4.5M151.3 12v4.5" stroke="#0000ff" stroke-width="1.3"/><path d="M162 19.5 H184" stroke="#000" stroke-width="1"/><path d="M170.5 17 L175 22 M175 17 L170.5 22" stroke="#0000ff" stroke-width="1.2"/><path d="M200.5 8 V30" stroke="#000" stroke-width="1"/><path d="M197.5 16.5 L202.5 21 M202.5 16.5 L197.5 21" stroke="#0000ff" stroke-width="1.2"/><path d="M223 13h13M223 16h10M223 18.5h13M223 21h10M223 23.5h13" stroke="#000" stroke-width="0.9"/><path d="M214 28 L216 26 L218 29 L222 23 L226 21 L228 19 L232 17 L234 13 L236 8" stroke="#00b000" stroke-width="1" fill="none"/><path d="M216 26 L218 29 M228 19 L230 20" stroke="#ff0000" stroke-width="1.2"/><rect x="244.5" y="12.5" width="14" height="14" fill="#e8e8e8" stroke="#000" stroke-width="1"/><path d="M248 16.5 V15.5 H255 V16.5 M251.5 15.5 V24 M249.5 24 H253.5" stroke="#000" stroke-width="1.6" fill="none"/><path d="M271 25 L283 14" stroke="#000" stroke-width="0.9"/><rect x="269.5" y="23" width="3" height="3" fill="#0000ff"/><rect x="281" y="12.5" width="3" height="3" fill="#0000ff"/><path d="M275 17l2.5 0-2.5 2.5zM280 22l-2.5 0 2.5-2.5z" fill="#0000ff" stroke="#0000ff"/><path d="M295 25 L307 14" stroke="#000" stroke-width="0.9"/><path d="M297 29 L312 16" stroke="#0000ff" stroke-width="0.9"/><path d="M296 16 L306 22" stroke="#0000ff" stroke-width="0.9"/><circle cx="305" cy="21" r="1.5" fill="#0000ff"/><path d='M323 26.5 L335 14.5' stroke='#444' stroke-width='4.2' stroke-linecap='round'/><path d='M323 26.5 L335 14.5' stroke='#d6d6d6' stroke-width='2.4' stroke-linecap='round'/><path d='M332.5 10.5 L338 12 L340.5 16.5 L336.5 18 L331 13.5Z' fill='#111' stroke='#000' stroke-width='0.8'/><path d='M324 16 L336.5 27' stroke='#444' stroke-width='4.2' stroke-linecap='round'/><path d='M324 16 L336.5 27' stroke='#e8e8e8' stroke-width='2.4' stroke-linecap='round'/><path d='M321 13.5 A4 4 0 1 0 327.5 15.5 L325 16 L323.5 13.5 L325 11.5Z' fill='#e8e8e8' stroke='#444' stroke-width='0.9'/><path d='M348.5 15.5 H363.5' stroke='#444' stroke-width='2.2' stroke-linecap='round'/><path d='M353.5 13 Q356 10.5 358.5 13' stroke='#444' stroke-width='1.4' fill='none'/><path d='M349.5 17 L351.5 27.7 H360.5 L362.5 17 Z' fill='#e4e4e4' stroke='#444' stroke-width='1'/><path d='M353.5 18.5v8M356 18.5v8M358.5 18.5v8' stroke='#777' stroke-width='0.9'/><path d="M374 13 H389" stroke="#ff0000" stroke-width="1.6"/><path d="M371 26 H391" stroke="#00b000" stroke-width="1.6"/><path d="M374 20 L377 16 L380 24 L383 18 L386 20 L389 15" stroke="#ff0000" stroke-width="0.9" fill="none"/><path d="M374 20 L377 16 M380 24 L383 18 M386 20 L389 15" stroke="#00b000" stroke-width="0.9" fill="none"/><path d="M397 10 L415 16 V21 M397 28 L415 21" stroke="#ff0000" stroke-width="1.5" fill="none"/><path d="M397 28 L415 21" stroke="#00b000" stroke-width="1.5"/><path d="M399 13 L402 24 M403 14 L406 23 M408 16 L410 22" stroke="#ff0000" stroke-width="0.8" stroke-dasharray="1.5,1"/><path d="M400 20 L402 14 M405 22 L407 15" stroke="#00b000" stroke-width="0.8" stroke-dasharray="1.5,1"/></svg>
<div class="a" style="left:1727px;top:37px;width:86px;height:21px;background:#fff;border:1px solid #7f98a5;border-radius:2px"></div>
<div class="t" style="left:1731px;top:41px;line-height:13px;">100 unités</div>
<div class="a" style="left:1794px;top:39px;width:17px;height:17px;background:linear-gradient(#e4edf2,#a9bdc8);border:1px solid #8ea5b1;border-radius:2px"></div>
<svg class="a" style="left:1798px;top:45px" width="9" height="6"><path d="M0 0H9L4.5 5Z" fill="#000"/></svg>
<div class="a" style="left:2143px;top:37px;width:89px;height:21px;background:#fff;border:1px solid #7f98a5;border-radius:2px"></div>
<div class="t" style="left:2147px;top:41px;line-height:13px;">15 minutes</div>
<div class="a" style="left:2213px;top:39px;width:17px;height:17px;background:linear-gradient(#e4edf2,#a9bdc8);border:1px solid #8ea5b1;border-radius:2px"></div>
<svg class="a" style="left:2217px;top:45px" width="9" height="6"><path d="M0 0H9L4.5 5Z" fill="#000"/></svg>
<div class="a" style="left:2483px;top:24px;width:247px;height:45px;background:linear-gradient(#fafcfd,#f0f5f8);border-left:1px solid #8aa3af"></div>
<div class="t" style="left:2494px;top:33px;line-height:13px;font-weight:bold">Breakout ProOrder actif</div>
<div class="t" style="left:2494px;top:47px;line-height:13px;">Version : <span class="lk">30 juil. 2015 11:01:09</span></div>
<div class="a" style="left:2654px;top:27px;width:70px;height:38px;border:1px solid #8aa3af;border-radius:3px;background:linear-gradient(#f4f8fa,#c9d9e1)"></div>
<svg class="a" style="left:2654px;top:27px" width="70" height="38" viewBox="0 0 70 38"><defs><linearGradient id="hdr" x1="0" y1="0" x2="0" y2="1"><stop offset="0" stop-color="#5cb8ec"/><stop offset="1" stop-color="#3a3aa8"/></linearGradient></defs><rect x="2.5" y="4.5" width="32" height="30" fill="#fff" stroke="#10108a" stroke-width="1.6"/><rect x="3" y="5" width="31" height="5" fill="url(#hdr)"/><path d="M14 10v24M23 10v24" stroke="#9aa8b0" stroke-width="0.8"/><path d="M5 13h6M16 13h5M26 13h6M5 16h3M17 16h4M26 16h5M5 19h5M16 19h5M27 19h4M5 22h2M17 22h4M26 22h5M5 25h4M16 25h5M27 25h4M5 28h6M17 28h4M26 28h3M5 31h2M17 31h4" stroke="#555" stroke-width="0.7"/><rect x="0" y="7" width="6" height="3" fill="#fff" stroke="#999" stroke-width="0.5"/><path d="M32 21 L38.5 12.5 L46.7 23.5 L59 8" stroke="#10c010" stroke-width="2.8" fill="none" stroke-linejoin="miter"/><path d="M54.5 5.5 L62.5 3.5 L61.5 11.5Z" fill="#10c010"/><g fill="#e6d050" stroke="#9a7a10" stroke-width="0.5"><rect x="30" y="29" width="10.5" height="5.5" rx="2"/><ellipse cx="35.2" cy="29" rx="5.2" ry="2"/><rect x="42" y="24" width="10.5" height="10.5" rx="2"/><ellipse cx="47.2" cy="24" rx="5.2" ry="2"/><rect x="54" y="18" width="10.5" height="16.5" rx="2"/><ellipse cx="59.2" cy="18" rx="5.2" ry="2"/></g><path d="M30.5 31.5h9.5M42.5 27h9.5M42.5 30h9.5M42.5 33h9.5M54.5 21h9.5M54.5 24h9.5M54.5 27h9.5M54.5 30h9.5M54.5 33h9.5" stroke="#8a6a10" stroke-width="0.6"/></svg>
<div class="a" style="left:1054px;top:69px;width:1672px;height:890px;background:#fff"></div>
<div class="a" style="left:2726px;top:24px;width:4px;height:1026px;background:#9cb9c6;border-left:1px solid #7f9aa6"></div>
<div class="a" style="left:1054px;top:69px;width:1617px;height:260px;border:1px solid #6f8a96;background:linear-gradient(#ffffff,#f3f6fc)"></div>
<div class="a" style="left:1054px;top:331px;width:1617px;height:173px;border:1px solid #6f8a96;background:#f1f5fd"></div>
<div class="a" style="left:1054px;top:506px;width:1617px;height:433px;border:1px solid #6f8a96;background:linear-gradient(#edf2fd,#dce4fa)"></div>
<svg class="a" style="left:1055px;top:70px" width="1615" height="258" viewBox="1055 70 1615 258"><polygon points="1056.2,328 1056.2,183.8 1068.8,183.8 1070.5,189.9 1072.2,128.4 1074.6,162.6 1076.7,142.1 1078.0,145.5 1080.1,87.4 1081.5,102.7 1084.2,87.4 1087.6,90.8 1090.3,114.7 1092.7,87.4 1094.4,87.4 1096.2,125.0 1099.6,138.6 1101.3,166.0 1103.0,148.9 1104.7,143.8 1106.4,155.7 1108.1,223.1 1222.6,223.1 1224.4,220.7 1226.1,200.2 1228.5,210.4 1231.2,203.6 1234.6,222.4 1238.0,189.9 1241.5,177.9 1243.2,200.2 1245.6,166.0 1248.3,189.9 1251.7,164.3 1254.4,169.4 1257.5,209.4 1260.3,183.8 1303.0,183.8 1304.7,210.4 1307.1,188.2 1309.8,196.8 1313.2,193.3 1316.0,207.0 1318.4,196.8 1321.8,225.8 1325.2,215.6 1328.6,230.9 1332.1,212.1 1337.2,227.5 1371.4,227.5 1373.1,205.3 1376.5,220.7 1379.9,234.4 1383.3,236.1 1386.8,250.1 1523.5,250.1 1525.2,265.1 1526.9,242.9 1530.3,253.2 1532.1,268.5 1535.5,263.4 1538.2,263.4 1540.6,293.2 1598.7,293.2 1601.1,282.2 1603.8,275.4 1607.3,287.4 1610.7,292.5 1613.4,304.4 1615.8,265.1 1619.2,258.3 1622.6,220.7 1624.4,248.0 1627.1,261.7 1631.2,270.3 1632.9,287.4 1635.3,270.3 1636.3,285.6 1677.4,285.6 1680.8,278.8 1684.2,258.3 1687.6,266.8 1691.0,234.4 1694.4,248.0 1697.9,230.9 1701.3,237.8 1705.7,207.0 1709.8,207.0 1713.2,230.9 1750.9,230.9 1754.3,195.0 1757.7,200.2 1764.5,203.6 1771.4,207.0 1774.1,215.6 1778.2,203.6 1785.0,205.3 1788.5,208.0 1824.4,208.0 1827.8,191.6 1832.9,177.9 1836.3,168.7 1841.5,177.9 1846.6,196.8 1851.7,220.7 1856.8,212.1 1863.7,198.5 1880.0,198.4 1900.8,198.4 1903.5,201.9 1906.0,193.2 1908.4,208.8 1911.1,219.2 1913.9,205.3 1916.3,212.2 1918.8,201.2 1920.8,208.8 1923.3,229.6 1983.8,229.6 1985.5,219.2 1988.0,236.5 1990.7,260.7 1993.5,243.4 1995.9,264.2 1998.3,246.9 2001.1,272.8 2003.9,252.0 2006.3,260.7 2009.8,272.8 2012.2,260.7 2014.9,260.0 2054.7,260.0 2057.2,248.6 2059.2,239.9 2061.7,253.8 2064.1,236.5 2066.9,257.2 2069.6,243.4 2072.4,252.0 2075.5,262.4 2079.0,246.9 2082.4,259.0 2087.6,246.9 2091.1,256.2 2129.1,256.2 2131.9,264.2 2134.3,266.9 2136.7,257.2 2140.2,233.0 2143.0,239.9 2146.4,226.1 2149.2,252.0 2151.6,233.0 2155.1,215.7 2158.5,222.6 2162.0,233.0 2167.2,234.0 2201.8,234.0 2205.3,243.4 2208.0,234.7 2210.4,239.9 2213.9,263.5 2277.9,263.5 2281.4,274.5 2286.6,279.7 2290.0,262.4 2295.2,265.9 2300.4,267.6 2303.9,248.6 2309.1,253.8 2312.5,248.6 2317.7,243.4 2354.0,243.4 2357.5,260.7 2362.7,267.6 2366.2,278.7 2430.2,278.7 2431.9,288.4 2434.7,316.1 2437.1,305.7 2439.9,278.0 2444.0,271.1 2449.2,234.7 2452.7,250.3 2456.1,278.0 2459.6,264.2 2464.8,249.6 2466.5,271.1 2470.0,261.7 2508.0,261.7 2510.4,246.9 2513.9,259.0 2518.4,228.5 2521.9,236.5 2525.3,253.8 2528.8,233.0 2532.2,260.7 2534.0,274.5 2537.4,260.7 2541.6,249.6 2544.4,258.3 2619.4,258.3 2619.4,328" fill="#aaaad9"/><path d="M1056.2 183.8L1068.8 183.8M1070.5 189.9L1072.2 128.4M1074.6 162.6L1076.7 142.1M1078.0 145.5L1080.1 87.4M1081.5 102.7L1084.2 87.4M1090.3 114.7L1092.7 87.4M1092.7 87.4L1094.4 87.4M1101.3 166.0L1103.0 148.9M1103.0 148.9L1104.7 143.8M1108.1 223.1L1222.6 223.1M1222.6 223.1L1224.4 220.7M1224.4 220.7L1226.1 200.2M1228.5 210.4L1231.2 203.6M1234.6 222.4L1238.0 189.9M1238.0 189.9L1241.5 177.9M1243.2 200.2L1245.6 166.0M1248.3 189.9L1251.7 164.3M1257.5 209.4L1260.3 183.8M1260.3 183.8L1303.0 183.8M1304.7 210.4L1307.1 188.2M1309.8 196.8L1313.2 193.3M1316.0 207.0L1318.4 196.8M1321.8 225.8L1325.2 215.6M1328.6 230.9L1332.1 212.1M1337.2 227.5L1371.4 227.5M1371.4 227.5L1373.1 205.3M1386.8 250.1L1523.5 250.1M1525.2 265.1L1526.9 242.9M1532.1 268.5L1535.5 263.4M1535.5 263.4L1538.2 263.4M1540.6 293.2L1598.7 293.2M1598.7 293.2L1601.1 282.2M1601.1 282.2L1603.8 275.4M1613.4 304.4L1615.8 265.1M1615.8 265.1L1619.2 258.3M1619.2 258.3L1622.6 220.7M1632.9 287.4L1635.3 270.3M1636.3 285.6L1677.4 285.6M1677.4 285.6L1680.8 278.8M1680.8 278.8L1684.2 258.3M1687.6 266.8L1691.0 234.4M1694.4 248.0L1697.9 230.9M1701.3 237.8L1705.7 207.0M1705.7 207.0L1709.8 207.0M1713.2 230.9L1750.9 230.9M1750.9 230.9L1754.3 195.0M1774.1 215.6L1778.2 203.6M1788.5 208.0L1824.4 208.0M1824.4 208.0L1827.8 191.6M1827.8 191.6L1832.9 177.9M1832.9 177.9L1836.3 168.7M1851.7 220.7L1856.8 212.1M1856.8 212.1L1863.7 198.5M1863.7 198.5L1880.0 198.4M1880.0 198.4L1900.8 198.4M1903.5 201.9L1906.0 193.2M1911.1 219.2L1913.9 205.3M1916.3 212.2L1918.8 201.2M1923.3 229.6L1983.8 229.6M1983.8 229.6L1985.5 219.2M1990.7 260.7L1993.5 243.4M1995.9 264.2L1998.3 246.9M2001.1 272.8L2003.9 252.0M2009.8 272.8L2012.2 260.7M2012.2 260.7L2014.9 260.0M2014.9 260.0L2054.7 260.0M2054.7 260.0L2057.2 248.6M2057.2 248.6L2059.2 239.9M2061.7 253.8L2064.1 236.5M2066.9 257.2L2069.6 243.4M2075.5 262.4L2079.0 246.9M2082.4 259.0L2087.6 246.9M2091.1 256.2L2129.1 256.2M2134.3 266.9L2136.7 257.2M2136.7 257.2L2140.2 233.0M2143.0 239.9L2146.4 226.1M2149.2 252.0L2151.6 233.0M2151.6 233.0L2155.1 215.7M2167.2 234.0L2201.8 234.0M2205.3 243.4L2208.0 234.7M2213.9 263.5L2277.9 263.5M2286.6 279.7L2290.0 262.4M2300.4 267.6L2303.9 248.6M2309.1 253.8L2312.5 248.6M2312.5 248.6L2317.7 243.4M2317.7 243.4L2354.0 243.4M2366.2 278.7L2430.2 278.7M2434.7 316.1L2437.1 305.7M2437.1 305.7L2439.9 278.0M2439.9 278.0L2444.0 271.1M2444.0 271.1L2449.2 234.7M2456.1 278.0L2459.6 264.2M2459.6 264.2L2464.8 249.6M2466.5 271.1L2470.0 261.7M2470.0 261.7L2508.0 261.7M2508.0 261.7L2510.4 246.9M2513.9 259.0L2518.4 228.5M2525.3 253.8L2528.8 233.0M2534.0 274.5L2537.4 260.7M2537.4 260.7L2541.6 249.6M2544.4 258.3L2619.4 258.3" stroke="#2bb52b" stroke-width="2" fill="none" stroke-linejoin="round"/><path d="M1068.8 183.8L1070.5 189.9M1072.2 128.4L1074.6 162.6M1076.7 142.1L1078.0 145.5M1080.1 87.4L1081.5 102.7M1084.2 87.4L1087.6 90.8M1087.6 90.8L1090.3 114.7M1094.4 87.4L1096.2 125.0M1096.2 125.0L1099.6 138.6M1099.6 138.6L1101.3 166.0M1104.7 143.8L1106.4 155.7M1106.4 155.7L1108.1 223.1M1226.1 200.2L1228.5 210.4M1231.2 203.6L1234.6 222.4M1241.5 177.9L1243.2 200.2M1245.6 166.0L1248.3 189.9M1251.7 164.3L1254.4 169.4M1254.4 169.4L1257.5 209.4M1303.0 183.8L1304.7 210.4M1307.1 188.2L1309.8 196.8M1313.2 193.3L1316.0 207.0M1318.4 196.8L1321.8 225.8M1325.2 215.6L1328.6 230.9M1332.1 212.1L1337.2 227.5M1373.1 205.3L1376.5 220.7M1376.5 220.7L1379.9 234.4M1379.9 234.4L1383.3 236.1M1383.3 236.1L1386.8 250.1M1523.5 250.1L1525.2 265.1M1526.9 242.9L1530.3 253.2M1530.3 253.2L1532.1 268.5M1538.2 263.4L1540.6 293.2M1603.8 275.4L1607.3 287.4M1607.3 287.4L1610.7 292.5M1610.7 292.5L1613.4 304.4M1622.6 220.7L1624.4 248.0M1624.4 248.0L1627.1 261.7M1627.1 261.7L1631.2 270.3M1631.2 270.3L1632.9 287.4M1635.3 270.3L1636.3 285.6M1684.2 258.3L1687.6 266.8M1691.0 234.4L1694.4 248.0M1697.9 230.9L1701.3 237.8M1709.8 207.0L1713.2 230.9M1754.3 195.0L1757.7 200.2M1757.7 200.2L1764.5 203.6M1764.5 203.6L1771.4 207.0M1771.4 207.0L1774.1 215.6M1778.2 203.6L1785.0 205.3M1785.0 205.3L1788.5 208.0M1836.3 168.7L1841.5 177.9M1841.5 177.9L1846.6 196.8M1846.6 196.8L1851.7 220.7M1900.8 198.4L1903.5 201.9M1906.0 193.2L1908.4 208.8M1908.4 208.8L1911.1 219.2M1913.9 205.3L1916.3 212.2M1918.8 201.2L1920.8 208.8M1920.8 208.8L1923.3 229.6M1985.5 219.2L1988.0 236.5M1988.0 236.5L1990.7 260.7M1993.5 243.4L1995.9 264.2M1998.3 246.9L2001.1 272.8M2003.9 252.0L2006.3 260.7M2006.3 260.7L2009.8 272.8M2059.2 239.9L2061.7 253.8M2064.1 236.5L2066.9 257.2M2069.6 243.4L2072.4 252.0M2072.4 252.0L2075.5 262.4M2079.0 246.9L2082.4 259.0M2087.6 246.9L2091.1 256.2M2129.1 256.2L2131.9 264.2M2131.9 264.2L2134.3 266.9M2140.2 233.0L2143.0 239.9M2146.4 226.1L2149.2 252.0M2155.1 215.7L2158.5 222.6M2158.5 222.6L2162.0 233.0M2162.0 233.0L2167.2 234.0M2201.8 234.0L2205.3 243.4M2208.0 234.7L2210.4 239.9M2210.4 239.9L2213.9 263.5M2277.9 263.5L2281.4 274.5M2281.4 274.5L2286.6 279.7M2290.0 262.4L2295.2 265.9M2295.2 265.9L2300.4 267.6M2303.9 248.6L2309.1 253.8M2354.0 243.4L2357.5 260.7M2357.5 260.7L2362.7 267.6M2362.7 267.6L2366.2 278.7M2430.2 278.7L2431.9 288.4M2431.9 288.4L2434.7 316.1M2449.2 234.7L2452.7 250.3M2452.7 250.3L2456.1 278.0M2464.8 249.6L2466.5 271.1M2510.4 246.9L2513.9 259.0M2518.4 228.5L2521.9 236.5M2521.9 236.5L2525.3 253.8M2528.8 233.0L2532.2 260.7M2532.2 260.7L2534.0 274.5M2541.6 249.6L2544.4 258.3" stroke="#e83232" stroke-width="2" fill="none" stroke-linejoin="round"/></svg>
<svg class="a" style="left:1055px;top:332px" width="1615" height="171" viewBox="1055 332 1615 171"><rect x="1069.8" y="340" width="38.2" height="78" fill="#50d250"/><rect x="1222.6" y="340" width="38.4" height="78" fill="#50d250"/><rect x="1322.0" y="340" width="14.5" height="78" fill="#50d250"/><rect x="1381.0" y="340" width="6.0" height="78" fill="#50d250"/><rect x="1523.0" y="340" width="2.0" height="78" fill="#50d250"/><rect x="1600.0" y="340" width="38.0" height="78" fill="#50d250"/><rect x="1826.0" y="340" width="39.0" height="78" fill="#50d250"/><rect x="1910.0" y="340" width="13.0" height="78" fill="#50d250"/><rect x="1984.0" y="340" width="7.0" height="78" fill="#50d250"/><rect x="2203.0" y="340" width="1.0" height="78" fill="#50d250"/><rect x="2279.0" y="340" width="39.0" height="78" fill="#50d250"/><rect x="2355.0" y="340" width="1.0" height="78" fill="#50d250"/><rect x="2432.0" y="340" width="3.0" height="78" fill="#50d250"/><rect x="2509.0" y="340" width="35.0" height="78" fill="#50d250"/><rect x="1303.0" y="418" width="20.0" height="78" fill="#de6363"/><rect x="1371.0" y="418" width="10.0" height="78" fill="#de6363"/><rect x="1525.0" y="418" width="16.0" height="78" fill="#de6363"/><rect x="1677.0" y="418" width="37.0" height="78" fill="#de6363"/><rect x="1750.0" y="418" width="38.0" height="78" fill="#de6363"/><rect x="1902.0" y="418" width="8.0" height="78" fill="#de6363"/><rect x="1990.0" y="418" width="27.0" height="78" fill="#de6363"/><rect x="2056.0" y="418" width="37.0" height="78" fill="#de6363"/><rect x="2130.0" y="418" width="36.0" height="78" fill="#de6363"/><rect x="2204.0" y="418" width="9.0" height="78" fill="#de6363"/><rect x="2356.0" y="418" width="9.0" height="78" fill="#de6363"/><rect x="2433.5" y="418" width="36.5" height="78" fill="#de6363"/><rect x="1055" y="418" width="1615" height="1" fill="#3535d0" shape-rendering="crispEdges"/></svg>
<svg class="a" style="left:1055px;top:507px" width="1615" height="431" viewBox="1055 507 1615 431"><path d="M1056.5 808.0V852.0M1057.5 813.8V824.5M1058.5 802.0V815.3M1059.5 801.0V818.7M1060.5 803.0V816.6M1063.5 851.7V902.4M1064.5 805.0V916.0M1065.5 807.8V828.1M1066.5 799.9V830.3M1070.5 819.9V839.8M1071.5 775.4V829.9M1072.5 722.0V779.8M1075.5 735.4V765.0M1076.5 727.9V743.9M1078.5 731.3V743.6M1079.5 727.8V738.4M1080.5 694.7V728.6M1081.5 676.5V704.1M1082.5 671.4V685.5M1084.5 687.8V713.9M1086.5 690.1V724.3M1088.5 673.7V698.8M1092.5 707.0V730.1M1094.5 673.0V729.0M1095.5 680.3V693.3M1100.5 722.6V753.8M1103.5 735.1V750.1M1105.5 758.0V772.2M1107.5 748.8V769.9M1110.5 787.6V801.7M1113.5 817.7V858.9M1115.5 821.9V844.0M1116.5 789.5V840.4M1118.5 806.5V839.6M1119.5 809.7V827.8M1121.5 804.0V858.5M1123.5 868.7V876.2M1125.5 867.9V889.2M1126.5 867.1V877.0M1127.5 835.4V877.4M1128.5 809.1V840.2M1130.5 840.0V859.6M1131.5 844.7V857.3M1132.5 840.8V855.8M1133.5 786.0V850.2M1135.5 808.6V833.4M1136.5 764.2V818.2M1137.5 743.3V777.3M1139.5 722.0V786.0M1140.5 745.9V760.7M1144.5 771.2V831.1M1145.5 768.8V789.2M1146.5 756.9V780.0M1147.5 753.2V781.1M1148.5 751.1V770.5M1150.5 754.2V776.5M1151.5 754.6V761.4M1153.5 757.3V778.1M1154.5 733.3V769.2M1156.5 730.7V780.7M1157.5 719.2V747.6M1160.5 721.6V776.0M1161.5 717.7V733.9M1164.5 737.3V757.5M1165.5 705.0V752.3M1166.5 708.0V712.1M1169.5 729.1V749.7M1176.5 774.5V814.7M1178.5 750.0V802.5M1180.5 738.0V792.0M1182.5 737.3V780.7M1183.5 730.2V750.2M1184.5 718.3V732.0M1185.5 715.0V724.8M1186.5 668.0V715.3M1187.5 666.7V687.2M1190.5 698.7V705.6M1191.5 697.8V704.4M1192.5 693.1V701.9M1193.5 694.1V699.0M1194.5 686.6V698.5M1196.5 671.0V692.5M1197.5 681.6V693.4M1198.5 679.3V684.8M1200.5 681.6V687.8M1201.5 678.2V685.5M1203.5 664.1V684.0M1205.5 664.6V681.4M1207.5 657.0V679.5M1209.5 651.9V670.2M1211.5 664.3V668.7M1215.5 674.2V695.2M1216.5 661.0V676.2M1219.5 683.3V688.7M1220.5 654.0V689.2M1221.5 648.8V659.4M1222.5 638.1V649.8M1225.5 650.3V672.5M1226.5 644.6V658.8M1227.5 629.4V652.7M1228.5 622.8V631.5M1229.5 624.0V629.6M1230.5 620.9V632.1M1233.5 636.9V653.5M1234.5 627.6V647.9M1235.5 607.8V630.4M1236.5 602.4V618.4M1237.5 599.5V610.3M1239.5 596.4V621.9M1241.5 590.9V605.6M1242.5 589.4V594.8M1243.5 582.7V598.2M1245.5 607.0V613.7M1246.5 578.3V619.1M1247.5 573.8V586.4M1249.5 592.6V616.4M1252.5 627.4V633.8M1255.5 589.5V646.6M1258.5 575.9V649.6M1259.5 574.9V590.7M1261.5 569.2V604.4M1263.5 571.6V579.4M1265.5 594.9V603.8M1266.5 573.0V597.6M1267.5 592.5V596.1M1268.5 589.5V595.4M1269.5 573.1V595.6M1273.5 576.7V594.6M1274.5 566.4V580.1M1275.5 563.9V572.9M1278.5 570.4V592.2M1283.5 595.1V604.2M1284.5 588.1V600.1M1285.5 584.8V590.6M1287.5 600.4V608.4M1288.5 589.4V607.0M1289.5 588.1V595.8M1291.5 585.4V608.0M1293.5 590.9V612.0M1294.5 587.0V627.0M1297.5 618.3V639.6M1298.5 615.1V628.8M1302.5 644.7V647.7M1303.5 642.8V645.8M1304.5 610.7V647.0M1306.5 625.1V642.4M1307.5 621.2V628.6M1308.5 619.1V629.8M1310.5 613.2V640.0M1312.5 616.3V634.5M1315.5 630.7V642.5M1316.5 606.3V640.6M1318.5 611.7V629.9M1320.5 609.6V634.6M1321.5 593.4V624.3M1322.5 580.3V605.1M1323.5 579.8V627.0M1325.5 580.4V601.5M1328.5 585.8V595.7M1329.5 582.0V593.8M1332.5 594.9V609.5M1334.5 583.5V606.8M1336.5 596.8V599.8M1338.5 589.6V600.1M1343.5 640.5V683.3M1345.5 634.3V683.1M1347.5 645.6V670.3M1348.5 620.5V658.1M1351.5 634.7V671.2M1354.5 626.4V659.2M1355.5 625.5V636.3M1356.5 627.8V632.1M1359.5 627.5V644.7M1361.5 630.7V639.5M1364.5 662.0V669.5M1365.5 662.1V665.8M1366.5 660.8V669.5M1367.5 635.8V663.1M1368.5 634.1V644.0M1369.5 622.4V644.4M1370.5 614.3V628.1M1372.5 617.0V656.2M1373.5 610.5V626.5M1376.5 652.9V664.0M1377.5 649.2V661.3M1378.5 641.1V658.0M1379.5 608.4V644.5M1381.5 615.1V629.7M1385.5 637.9V651.5M1386.5 624.0V641.7M1387.5 620.0V629.4M1392.5 639.2V645.7M1393.5 637.6V645.8M1394.5 613.2V641.1M1395.5 606.3V620.6M1396.5 597.3V612.5M1397.5 595.1V604.8M1399.5 594.7V607.4M1403.5 605.8V629.4M1404.5 598.9V611.3M1407.5 620.5V625.8M1409.5 610.0V633.6M1411.5 616.6V627.8M1416.5 625.6V640.4M1418.5 623.9V642.9M1419.5 625.2V628.2M1424.5 646.5V683.2M1425.5 635.8V658.4M1427.5 650.3V671.1M1435.5 699.0V725.7M1437.5 705.6V719.4M1438.5 688.0V711.4M1443.5 703.1V729.4M1445.5 679.4V734.8M1449.5 720.7V755.2M1451.5 724.6V741.6M1452.5 718.1V739.0M1454.5 725.4V733.9M1455.5 717.4V727.9M1456.5 714.9V730.7M1458.5 702.7V749.2M1460.5 694.0V754.0M1461.5 693.2V716.5M1463.5 723.4V732.1M1466.5 720.7V760.6M1469.5 729.0V767.4M1471.5 752.8V770.7M1472.5 745.4V764.8M1473.5 731.4V757.4M1477.5 740.8V762.8M1481.5 749.1V777.1M1482.5 748.4V757.8M1485.5 748.1V777.0M1487.5 759.3V764.8M1489.5 750.1V778.3M1491.5 767.6V775.9M1492.5 745.8V772.5M1494.5 751.0V775.7M1495.5 749.2V762.9M1499.5 755.8V767.6M1500.5 752.7V762.4M1501.5 709.0V764.0M1502.5 706.3V724.6M1503.5 706.4V715.5M1507.5 714.9V741.0M1509.5 724.2V728.9M1510.5 703.0V725.8M1513.5 716.7V727.7M1516.5 700.3V730.8M1518.5 718.2V730.0M1519.5 693.6V724.9M1520.5 691.5V729.0M1522.5 708.1V723.4M1523.5 694.9V716.1M1526.5 723.2V751.2M1528.5 687.9V760.0M1532.5 731.0V746.1M1533.5 703.0V736.3M1534.5 727.0V730.0M1535.5 696.2V733.3M1538.5 701.3V725.8M1539.5 693.1V712.7M1540.5 668.3V698.9M1541.5 661.4V679.0M1544.5 704.8V724.8M1545.5 684.8V705.9M1546.5 678.1V687.3M1548.5 696.9V725.2M1551.5 696.4V707.8M1554.5 696.0V732.1M1555.5 689.3V704.2M1556.5 683.9V693.9M1557.5 684.4V691.9M1560.5 685.6V700.7M1562.5 672.6V704.9M1565.5 679.5V702.1M1566.5 670.4V686.0M1568.5 658.7V692.7M1570.5 643.2V672.9M1573.5 652.5V683.1M1574.5 648.9V661.4M1578.5 659.4V675.7M1582.5 672.0V681.6M1586.5 680.6V687.1M1587.5 671.1V684.2M1591.5 679.4V687.6M1592.5 672.7V679.6M1595.5 685.2V688.2M1597.5 683.5V688.7M1598.5 665.5V689.4M1599.5 659.2V671.1M1600.5 650.2V664.6M1603.5 643.0V680.7M1605.5 639.9V673.0M1606.5 630.0V643.7M1611.5 644.0V663.8M1613.5 646.0V671.0M1614.5 642.4V662.4M1616.5 648.7V655.3M1617.5 620.8V657.1M1618.5 595.0V627.0M1619.5 581.8V611.2M1621.5 608.6V620.7M1622.5 585.4V619.2M1624.5 575.1V613.3M1626.5 601.3V613.7M1628.5 610.0V623.6M1631.5 613.9V646.0M1634.5 616.1V637.6M1636.5 625.1V639.3M1639.5 626.9V636.8M1643.5 637.3V650.9M1646.5 663.9V671.9M1648.5 646.3V685.0M1649.5 639.1V654.6M1652.5 633.3V662.3M1658.5 675.7V697.2M1659.5 668.1V688.8M1660.5 667.0V678.0M1663.5 668.5V699.1M1666.5 692.4V696.6M1668.5 691.0V701.4M1669.5 693.4V698.6M1670.5 676.1V695.0M1672.5 666.3V682.7M1674.5 684.9V690.5M1675.5 656.0V687.1M1676.5 665.5V684.8M1677.5 661.1V668.0M1681.5 691.5V702.2M1682.5 693.1V697.5M1684.5 687.2V729.0M1686.5 684.2V699.0M1691.5 731.3V774.2M1695.5 719.0V773.5M1698.5 760.4V774.9M1699.5 750.8V771.8M1701.5 758.5V764.6M1703.5 752.5V765.9M1705.5 745.6V763.4M1708.5 779.4V793.2M1710.5 781.2V790.0M1711.5 778.7V791.5M1712.5 774.6V782.1M1713.5 762.1V782.5M1714.5 758.9V771.9M1715.5 754.1V771.8M1716.5 735.0V767.0M1718.5 738.8V769.8M1720.5 751.1V760.0M1721.5 748.3V752.9M1722.5 735.8V753.8M1723.5 732.2V741.7M1724.5 733.2V740.2M1725.5 732.2V735.2M1727.5 744.6V750.2M1728.5 737.2V748.4M1729.5 732.2V742.6M1730.5 732.1V735.1M1731.5 708.7V737.6M1733.5 699.6V717.0M1734.5 689.4V704.5M1736.5 703.9V710.5M1738.5 700.4V717.4M1740.5 710.8V715.4M1741.5 709.6V717.0M1742.5 696.5V715.7M1743.5 686.9V703.0M1745.5 682.5V692.3M1747.5 685.6V709.0M1748.5 687.1V690.1M1750.5 681.0V710.0M1751.5 686.9V692.2M1756.5 717.0V751.0M1757.5 718.0V724.0M1759.5 727.0V743.1M1761.5 741.4V748.8M1762.5 732.7V745.4M1763.5 727.2V736.2M1764.5 718.3V730.3M1766.5 725.1V731.6M1767.5 720.8V727.9M1768.5 720.2V725.4M1770.5 721.0V732.0M1772.5 724.7V731.6M1773.5 718.7V728.3M1776.5 722.5V736.7M1777.5 718.0V735.0M1780.5 724.6V728.3M1781.5 720.2V728.4M1784.5 723.2V727.5M1790.5 732.1V736.3M1791.5 726.5V732.9M1793.5 728.1V731.6M1794.5 728.7V731.7M1795.5 724.5V729.7M1796.5 721.3V727.2M1799.5 725.3V729.0M1800.5 716.5V727.4M1802.5 719.3V725.1M1803.5 718.8V721.9M1804.5 711.2V719.5M1805.5 697.0V716.0M1806.5 698.6V705.6M1807.5 697.9V700.9M1810.5 703.1V723.0M1811.5 698.1V705.3M1814.5 712.7V726.5M1817.5 724.1V733.3M1818.5 704.9V731.0M1819.5 701.4V712.4M1821.5 717.8V729.1M1823.5 690.0V730.1M1824.5 684.3V723.1M1825.5 676.6V690.4M1826.5 649.9V685.9M1828.5 656.6V673.0M1829.5 653.7V661.5M1830.5 645.6V663.4M1832.5 649.4V666.5M1833.5 632.7V655.8M1834.5 625.6V639.6M1836.5 641.2V650.3M1837.5 611.0V648.4M1838.5 633.2V644.9M1839.5 622.8V637.6M1840.5 614.0V631.3M1844.5 622.4V641.0M1853.5 659.0V685.5M1854.5 655.6V674.0M1855.5 652.9V659.5M1860.5 667.5V675.2M1861.5 663.0V669.8M1862.5 653.9V671.9M1865.5 661.8V664.8M1866.5 653.4V665.5M1867.5 643.2V657.6M1869.5 644.3V656.1M1870.5 636.6V649.1M1872.5 638.8V648.8M1874.5 639.4V645.8M1876.5 640.4V649.0M1877.5 630.9V644.4M1879.5 630.4V649.4M1881.5 613.3V637.5M1882.5 609.9V622.7M1883.5 607.9V617.2M1884.5 603.1V640.0M1886.5 601.1V616.4M1890.5 612.8V628.4M1891.5 612.3V616.9M1892.5 612.6V615.6M1893.5 608.4V616.1M1894.5 602.0V611.0M1895.5 594.6V611.5M1896.5 588.7V598.2M1897.5 563.0V605.0M1899.5 570.1V595.2M1900.5 552.9V581.1M1902.5 566.3V581.8M1903.5 544.0V573.3M1904.5 548.4V570.5M1905.5 540.5V551.1M1907.5 537.6V556.7M1910.5 546.7V569.8M1912.5 544.0V558.7M1913.5 538.0V563.0M1914.5 533.4V547.1M1919.5 530.7V554.0M1923.5 545.7V568.1M1926.5 563.0V611.0M1929.5 586.1V622.0M1930.5 577.5V591.7M1935.5 622.9V646.0M1936.5 615.9V631.2M1938.5 637.0V681.0M1940.5 654.9V677.0M1943.5 654.5V667.4M1948.5 674.1V688.2M1951.5 696.0V700.3M1952.5 681.9V696.3M1953.5 675.8V684.7M1957.5 678.0V692.0M1958.5 687.8V691.0M1959.5 685.6V689.9M1960.5 676.0V686.3M1962.5 676.4V685.1M1963.5 673.3V680.5M1965.5 670.8V681.8M1966.5 662.0V672.9M1970.5 667.8V677.0M1972.5 665.6V676.9M1973.5 646.4V670.1M1974.5 643.9V650.7M1975.5 643.5V647.1M1977.5 637.8V665.0M1978.5 631.4V641.2M1982.5 646.6V654.9M1983.5 641.1V651.8M1984.5 638.8V648.0M1985.5 598.0V650.8M1986.5 632.1V641.9M1987.5 604.8V640.8M1989.5 620.5V630.5M1992.5 640.0V687.0M1993.5 642.2V659.7M1995.5 639.4V677.5M1999.5 660.7V685.9M2000.5 657.9V664.8M2003.5 648.5V679.3M2004.5 644.4V657.3M2006.5 653.2V660.9M2007.5 646.0V659.0M2011.5 640.0V670.6M2012.5 650.2V659.5M2013.5 638.4V656.7M2018.5 641.7V657.0M2020.5 647.2V657.0M2021.5 645.7V662.0M2023.5 640.8V653.9M2026.5 654.2V660.6M2027.5 644.8V655.3M2028.5 636.1V647.8M2030.5 633.1V652.0M2031.5 631.7V638.3M2032.5 629.9V633.5M2034.5 626.9V636.8M2035.5 626.6V630.8M2036.5 626.1V629.1M2039.5 625.1V634.2M2040.5 623.2V626.2M2044.5 626.3V632.5M2046.5 626.7V637.0M2052.5 635.9V644.5M2055.5 660.1V676.0M2060.5 689.6V725.2M2062.5 687.6V708.7M2064.5 687.8V717.7M2070.5 709.6V714.9M2071.5 691.9V710.5M2075.5 720.6V724.9M2077.5 697.2V725.4M2079.5 690.9V706.2M2081.5 686.4V716.7M2083.5 694.0V709.8M2084.5 694.0V700.1M2086.5 693.0V700.3M2088.5 696.1V716.0M2090.5 695.3V704.5M2092.5 701.7V710.0M2093.5 691.1V705.8M2094.5 683.3V694.4M2095.5 681.4V685.9M2097.5 691.6V700.4M2098.5 692.6V695.8M2099.5 686.9V693.7M2100.5 684.9V690.3M2101.5 680.1V688.7M2102.5 666.6V685.7M2104.5 669.7V676.7M2105.5 652.0V674.4M2106.5 663.7V668.4M2109.5 671.5V676.7M2111.5 673.0V682.4M2113.5 677.3V687.0M2115.5 670.3V681.4M2118.5 672.4V687.2M2120.5 672.3V689.1M2123.5 678.0V722.0M2125.5 699.5V719.7M2128.5 693.1V725.4M2136.5 717.9V729.6M2138.5 726.2V738.8M2140.5 728.5V743.2M2142.5 745.7V751.0M2143.5 731.3V747.6M2146.5 740.4V750.5M2150.5 744.3V757.5M2151.5 739.6V750.7M2154.5 735.0V768.7M2156.5 761.8V770.6M2157.5 758.7V766.2M2158.5 740.8V765.6M2160.5 738.3V752.4M2162.5 733.5V743.4M2165.5 750.0V755.5M2166.5 750.7V753.7M2167.5 746.2V753.3M2168.5 745.5V751.0M2169.5 744.2V749.3M2170.5 738.3V747.8M2171.5 729.5V742.6M2173.5 725.0V733.7M2176.5 723.1V731.6M2179.5 732.1V736.5M2180.5 723.4V735.4M2183.5 722.6V728.8M2185.5 722.2V726.5M2187.5 723.8V729.5M2191.5 732.9V736.1M2193.5 723.5V739.2M2196.5 730.4V736.7M2197.5 724.0V736.4M2201.5 744.4V755.3M2202.5 737.9V748.7M2208.5 756.0V773.8M2209.5 745.6V756.9M2211.5 733.2V757.0M2213.5 731.7V757.5M2216.5 723.8V757.5M2217.5 714.7V727.9M2220.5 716.0V744.9M2221.5 716.7V734.4M2222.5 699.3V723.2M2226.5 704.8V708.7M2227.5 683.1V706.7M2228.5 675.7V689.1M2230.5 674.9V686.7M2235.5 682.6V693.8M2236.5 678.0V687.3M2237.5 677.0V685.3M2239.5 676.9V683.9M2242.5 674.2V683.5M2244.5 679.1V682.1M2245.5 672.7V680.6M2247.5 676.1V679.1M2249.5 678.7V681.7M2250.5 671.8V679.2M2252.5 672.7V678.7M2256.5 676.6V680.9M2258.5 677.9V681.0M2263.5 682.5V694.4M2266.5 685.9V689.7M2267.5 683.8V688.1M2269.5 690.1V693.1M2270.5 684.5V691.9M2271.5 678.6V687.7M2272.5 677.1V682.6M2274.5 673.0V681.4M2276.5 672.0V677.7M2278.5 654.8V679.4M2279.5 651.9V657.1M2280.5 633.8V655.6M2282.5 632.2V644.9M2286.5 643.2V657.7M2287.5 624.7V659.0M2290.5 639.3V658.6M2291.5 634.3V642.1M2293.5 624.4V649.5M2295.5 631.4V641.7M2297.5 627.2V640.4M2299.5 635.9V638.9M2300.5 616.2V637.3M2302.5 618.0V636.3M2303.5 616.3V621.8M2304.5 609.6V619.7M2305.5 609.5V614.0M2306.5 610.0V633.0M2309.5 608.0V621.6M2311.5 607.2V612.9M2312.5 607.0V610.0M2313.5 607.0V610.6M2315.5 618.4V626.7M2316.5 618.6V624.8M2317.5 614.2V619.6M2318.5 595.0V615.3M2319.5 605.2V611.2M2320.5 603.9V607.9M2323.5 597.8V608.6M2324.5 596.8V600.3M2326.5 597.2V600.7M2329.5 605.0V608.0M2330.5 602.2V607.1M2331.5 599.7V603.5M2334.5 601.4V606.3M2337.5 602.0V610.2M2338.5 602.2V605.2M2340.5 600.1V606.1M2343.5 601.6V607.3M2344.5 599.6V602.8M2346.5 599.1V603.7M2349.5 598.5V604.5M2350.5 596.2V608.0M2354.5 600.9V615.3M2358.5 617.3V640.3M2362.5 627.5V636.2M2363.5 608.8V635.7M2364.5 602.5V619.1M2365.5 600.2V609.7M2368.5 611.3V627.2M2369.5 600.0V614.8M2371.5 598.5V604.2M2373.5 600.2V610.5M2376.5 602.0V621.5M2379.5 612.0V616.2M2380.5 603.3V615.3M2382.5 602.0V614.0M2384.5 604.7V619.6M2385.5 599.8V609.6M2386.5 583.9V604.8M2387.5 573.7V592.0M2388.5 566.3V637.0M2389.5 558.3V582.6M2390.5 560.7V577.1M2391.5 553.0V565.0M2394.5 584.1V611.7M2397.5 612.9V625.3M2398.5 605.9V618.9M2404.5 633.9V643.8M2406.5 637.5V642.0M2408.5 630.3V646.7M2409.5 627.4V634.0M2411.5 627.0V646.0M2412.5 628.7V638.0M2415.5 625.6V642.6M2416.5 622.2V630.5M2418.5 632.0V635.0M2419.5 628.7V634.3M2420.5 615.3V629.2M2421.5 615.9V619.0M2424.5 617.2V624.7M2430.5 636.4V662.7M2433.5 674.7V699.6M2434.5 667.0V680.0M2436.5 665.5V701.2M2439.5 710.4V729.9M2440.5 691.0V717.0M2442.5 697.4V718.3M2445.5 719.0V748.0M2452.5 759.2V781.0M2453.5 729.5V761.5M2454.5 728.3V740.7M2455.5 718.9V732.0M2458.5 725.3V753.6M2459.5 710.3V738.7M2462.5 733.5V749.2M2464.5 724.1V744.9M2468.5 740.5V748.0M2469.5 733.0V749.5M2470.5 722.1V738.1M2472.5 727.9V734.9M2475.5 737.1V743.6M2476.5 726.4V740.8M2478.5 731.2V739.1M2479.5 722.9V736.7M2480.5 722.0V735.0M2489.5 745.2V765.4M2490.5 741.4V750.4M2492.5 748.7V758.1M2493.5 745.6V750.3M2494.5 741.0V747.8M2495.5 740.5V743.5M2496.5 739.8V754.0M2498.5 748.0V751.9M2499.5 728.3V752.7M2500.5 726.3V733.3M2501.5 718.5V730.1M2502.5 703.4V725.6M2503.5 697.6V735.0M2505.5 709.3V729.8M2507.5 705.8V725.7M2510.5 695.4V717.9M2512.5 691.0V707.4M2513.5 689.9V699.3M2514.5 689.8V697.2M2516.5 683.0V696.7M2518.5 679.5V700.3M2520.5 669.0V692.8M2521.5 657.4V675.7M2524.5 688.7V705.2M2528.5 665.0V707.7M2529.5 669.0V680.4M2532.5 696.6V718.7M2534.5 704.3V725.0M2536.5 700.0V710.9M2537.5 697.0V708.2M2538.5 692.6V708.0M2540.5 689.6V714.3M2542.5 673.0V702.7M2544.5 676.3V688.0M2545.5 665.0V680.5M2546.5 675.1V679.9M2547.5 673.8V678.5M2548.5 669.8V676.5M2550.5 670.5V673.6M2551.5 664.7V672.0M2552.5 664.1V671.0M2555.5 667.5V670.5M2559.5 673.9V677.3M2561.5 678.2V681.2M2563.5 678.0V684.7M2564.5 677.2V682.5M2566.5 680.2V683.2M2567.5 678.9V681.9M2569.5 681.6V684.6M2571.5 681.1V684.1M2572.5 680.9V684.0M2574.5 678.2V684.4M2577.5 679.6V686.9M2580.5 680.4V729.0M2591.5 842.3V852.3M2592.5 819.0V844.9M2593.5 807.8V827.5M2597.5 829.6V844.9M2600.5 825.3V858.8M2602.5 829.4V853.6M2603.5 823.3V839.0M2606.5 844.5V865.9M2608.5 856.3V863.8M2609.5 851.9V861.5M2610.5 841.1V854.4M2611.5 829.4V849.0M2614.5 834.1V840.5M2615.5 825.0V835.9M2616.5 822.6V829.6M2617.5 820.3V825.2M2619.5 821.0V840.0M2620.5 825.8V833.2" stroke="#4fd34f" stroke-width="1" fill="none" shape-rendering="crispEdges"/><path d="M1061.5 796.6V882.0M1062.5 874.3V916.2M1067.5 798.8V817.1M1068.5 804.9V822.4M1069.5 801.0V836.0M1073.5 735.9V750.7M1074.5 742.0V761.6M1077.5 728.1V749.4M1083.5 667.8V718.8M1085.5 682.4V723.4M1087.5 686.4V697.6M1089.5 672.7V707.0M1090.5 700.0V723.8M1091.5 705.0V737.5M1093.5 710.6V719.0M1096.5 672.2V696.3M1097.5 687.3V701.8M1098.5 697.1V715.1M1099.5 702.3V755.3M1101.5 716.3V733.4M1102.5 730.8V746.9M1104.5 734.0V768.6M1106.5 753.9V765.8M1108.5 746.9V790.2M1109.5 783.5V798.0M1111.5 777.9V814.8M1112.5 794.7V859.3M1114.5 808.7V845.1M1117.5 789.0V833.4M1120.5 812.5V848.7M1122.5 807.7V881.0M1124.5 861.6V884.7M1129.5 810.0V860.2M1134.5 800.0V827.9M1138.5 743.3V773.7M1141.5 743.2V815.6M1142.5 799.5V827.2M1143.5 806.2V832.1M1149.5 751.9V780.7M1152.5 754.0V792.0M1155.5 740.9V780.5M1158.5 720.8V756.5M1159.5 748.4V775.7M1162.5 708.2V734.1M1163.5 687.0V765.6M1167.5 706.3V721.0M1168.5 714.3V755.0M1170.5 732.6V747.6M1171.5 738.6V795.0M1172.5 750.6V787.6M1173.5 779.4V808.5M1174.5 795.1V812.3M1175.5 770.0V819.6M1177.5 773.3V795.4M1179.5 755.5V777.6M1181.5 745.9V783.3M1188.5 666.4V693.0M1189.5 685.6V703.3M1195.5 687.9V695.3M1199.5 679.8V685.3M1202.5 680.2V683.2M1204.5 662.5V680.1M1206.5 646.0V681.6M1208.5 661.6V666.3M1210.5 654.3V671.2M1212.5 666.0V691.4M1213.5 685.3V690.9M1214.5 682.4V692.3M1217.5 658.9V694.0M1218.5 666.5V689.9M1223.5 638.0V660.3M1224.5 657.5V671.2M1231.5 622.9V652.0M1232.5 642.4V653.8M1238.5 601.4V615.4M1240.5 596.2V640.0M1244.5 584.2V614.4M1248.5 576.0V621.0M1250.5 601.5V626.9M1251.5 617.0V634.5M1253.5 617.7V645.1M1254.5 631.9V639.1M1256.5 586.5V651.3M1257.5 636.2V653.9M1260.5 568.2V599.5M1262.5 572.8V581.3M1264.5 569.6V608.5M1270.5 573.8V586.4M1271.5 580.4V590.5M1272.5 588.1V594.8M1276.5 563.1V568.4M1277.5 566.7V588.3M1279.5 568.8V594.2M1280.5 588.0V600.9M1281.5 596.6V602.3M1282.5 600.5V605.9M1286.5 587.0V604.0M1290.5 590.1V606.7M1292.5 585.2V610.0M1295.5 585.4V616.3M1296.5 611.6V634.1M1299.5 609.7V619.4M1300.5 612.1V643.4M1301.5 605.0V648.7M1305.5 608.6V648.5M1309.5 618.0V637.4M1311.5 616.5V630.8M1313.5 615.2V624.5M1314.5 618.9V637.5M1317.5 603.0V628.8M1319.5 608.1V638.2M1324.5 577.6V597.8M1326.5 580.7V584.5M1327.5 582.6V592.2M1330.5 581.4V586.2M1331.5 582.7V608.3M1333.5 595.3V605.9M1335.5 585.6V602.5M1337.5 595.2V602.0M1339.5 591.2V595.6M1340.5 592.4V597.8M1341.5 595.9V633.8M1342.5 605.0V681.8M1344.5 650.6V682.9M1346.5 637.0V668.7M1349.5 622.5V661.1M1350.5 655.7V674.0M1352.5 630.0V665.0M1353.5 645.3V658.9M1357.5 630.7V637.0M1358.5 633.8V643.8M1360.5 632.0V641.9M1362.5 631.4V652.7M1363.5 648.0V670.4M1371.5 609.8V658.7M1374.5 610.5V629.8M1375.5 623.6V659.2M1380.5 607.3V652.0M1382.5 612.3V630.8M1383.5 626.4V649.0M1384.5 647.4V650.4M1388.5 618.8V625.5M1389.5 624.0V628.4M1390.5 622.7V646.0M1391.5 637.0V642.9M1398.5 591.9V627.0M1400.5 590.2V614.0M1401.5 609.1V631.6M1402.5 625.8V630.6M1405.5 599.2V623.3M1406.5 619.4V626.7M1408.5 620.8V637.0M1410.5 609.7V627.8M1412.5 614.5V627.6M1413.5 622.3V641.6M1414.5 633.9V640.9M1415.5 636.4V641.4M1417.5 627.7V641.6M1420.5 622.9V646.0M1421.5 632.3V645.7M1422.5 635.0V661.5M1423.5 653.0V690.2M1426.5 642.7V670.0M1428.5 654.2V665.2M1429.5 662.2V678.5M1430.5 668.3V686.8M1431.5 670.0V729.0M1432.5 681.3V693.3M1433.5 685.8V709.2M1434.5 706.7V730.7M1436.5 691.8V713.8M1439.5 684.0V716.0M1440.5 705.6V717.3M1441.5 715.9V725.7M1442.5 711.9V731.2M1444.5 706.3V741.5M1446.5 675.4V731.7M1447.5 671.0V747.5M1448.5 732.7V749.8M1450.5 714.7V738.0M1453.5 720.5V734.1M1457.5 715.7V748.3M1459.5 698.4V742.2M1462.5 692.1V732.3M1464.5 715.2V753.0M1465.5 740.1V755.8M1467.5 721.1V764.0M1468.5 748.5V771.0M1470.5 743.0V767.5M1474.5 732.9V745.8M1475.5 734.7V741.5M1476.5 734.3V762.9M1478.5 741.4V761.6M1479.5 755.4V773.0M1480.5 768.2V779.2M1483.5 747.2V754.1M1484.5 748.2V771.2M1486.5 752.4V770.8M1488.5 757.1V780.4M1490.5 751.7V778.3M1493.5 750.0V777.1M1496.5 747.8V756.5M1497.5 749.2V767.2M1498.5 759.8V773.0M1504.5 706.4V735.9M1505.5 723.8V737.2M1506.5 727.5V743.3M1508.5 716.6V732.6M1511.5 708.1V713.8M1512.5 711.3V728.4M1514.5 717.6V728.8M1515.5 726.2V730.4M1517.5 701.8V730.3M1521.5 695.5V720.0M1524.5 699.5V713.7M1525.5 702.1V756.0M1527.5 719.1V743.1M1529.5 696.9V700.3M1530.5 692.3V741.8M1531.5 728.1V746.4M1536.5 698.5V716.5M1537.5 706.6V725.1M1542.5 664.7V716.0M1543.5 696.9V723.4M1547.5 683.3V726.7M1549.5 691.6V699.6M1550.5 692.8V708.0M1552.5 694.5V705.4M1553.5 699.2V727.1M1558.5 682.9V710.0M1559.5 684.5V697.8M1561.5 686.7V702.5M1563.5 676.2V697.3M1564.5 688.8V700.2M1567.5 669.5V691.7M1569.5 654.9V673.3M1571.5 644.9V673.9M1572.5 666.0V680.4M1575.5 649.9V659.4M1576.5 654.6V661.0M1577.5 656.0V674.5M1579.5 660.6V668.9M1580.5 663.5V680.5M1581.5 678.3V681.3M1583.5 673.0V687.0M1584.5 676.6V687.3M1585.5 685.0V688.0M1588.5 672.2V676.5M1589.5 674.6V685.3M1590.5 680.4V689.7M1593.5 670.3V677.8M1594.5 673.6V687.2M1596.5 671.0V688.8M1601.5 655.1V677.3M1602.5 667.8V681.8M1604.5 630.0V673.5M1607.5 632.5V640.2M1608.5 630.5V638.4M1609.5 631.2V640.3M1610.5 633.6V668.6M1612.5 642.1V669.9M1615.5 640.1V653.3M1620.5 584.4V620.3M1623.5 570.0V611.8M1625.5 580.7V619.9M1627.5 598.5V623.4M1629.5 615.5V622.4M1630.5 616.5V636.4M1632.5 610.7V620.5M1633.5 612.6V636.4M1635.5 620.0V639.2M1637.5 629.5V637.6M1638.5 628.5V636.3M1640.5 629.2V656.0M1641.5 630.4V636.4M1642.5 631.2V653.4M1644.5 641.2V662.5M1645.5 653.4V675.4M1647.5 666.2V679.5M1650.5 639.8V646.3M1651.5 635.5V661.8M1653.5 640.9V697.0M1654.5 638.8V647.1M1655.5 637.2V663.0M1656.5 654.5V672.3M1657.5 662.5V696.2M1661.5 662.0V675.8M1662.5 664.9V698.8M1664.5 670.3V695.7M1665.5 675.0V700.0M1667.5 688.6V701.6M1671.5 674.8V683.7M1673.5 667.5V688.9M1678.5 663.0V670.8M1679.5 663.3V693.8M1680.5 688.7V702.7M1683.5 692.8V704.1M1685.5 687.5V706.2M1687.5 682.3V697.4M1688.5 688.0V698.7M1689.5 692.1V729.0M1690.5 715.9V766.4M1692.5 697.0V762.3M1693.5 738.2V777.3M1694.5 760.8V785.8M1696.5 723.2V760.8M1697.5 749.4V773.7M1700.5 752.4V765.5M1702.5 741.0V765.2M1704.5 752.7V763.3M1706.5 749.6V781.0M1707.5 777.9V785.9M1709.5 779.3V791.3M1717.5 743.6V768.8M1719.5 738.5V763.4M1726.5 732.8V754.0M1732.5 690.0V715.2M1735.5 687.8V712.1M1737.5 690.0V717.4M1739.5 699.1V716.8M1744.5 684.3V692.6M1746.5 682.9V709.9M1749.5 685.5V704.9M1752.5 686.3V699.5M1753.5 692.1V706.4M1754.5 700.6V723.4M1755.5 719.2V738.8M1758.5 718.8V744.0M1760.5 729.6V747.6M1765.5 721.5V732.7M1769.5 718.5V735.1M1771.5 719.6V730.4M1774.5 721.0V727.4M1775.5 724.6V738.6M1778.5 718.5V727.4M1779.5 722.8V728.1M1782.5 722.2V725.2M1783.5 723.1V727.6M1785.5 723.4V732.3M1786.5 731.5V735.3M1787.5 733.6V736.6M1788.5 734.4V737.4M1789.5 729.0V737.0M1792.5 726.3V730.8M1797.5 716.0V729.0M1798.5 724.1V728.2M1801.5 718.4V724.6M1808.5 695.0V717.0M1809.5 712.4V723.5M1812.5 697.5V722.0M1813.5 715.8V727.6M1815.5 703.0V729.0M1816.5 719.2V729.9M1820.5 703.3V723.5M1822.5 715.6V736.0M1827.5 653.4V674.5M1831.5 649.5V666.2M1835.5 625.8V656.4M1841.5 614.1V623.2M1842.5 618.1V634.2M1843.5 628.3V638.3M1845.5 622.6V632.2M1846.5 627.2V665.0M1847.5 629.4V637.4M1848.5 633.2V644.3M1849.5 643.4V647.8M1850.5 642.2V669.3M1851.5 664.7V680.3M1852.5 674.4V685.0M1856.5 653.7V663.2M1857.5 659.6V673.9M1858.5 665.1V673.5M1859.5 666.4V672.2M1863.5 657.1V661.9M1864.5 658.7V668.0M1868.5 642.5V656.8M1871.5 637.0V651.8M1873.5 637.0V645.9M1875.5 638.7V648.3M1878.5 629.6V647.3M1880.5 630.1V637.5M1885.5 598.8V618.3M1887.5 600.2V626.7M1888.5 621.4V626.8M1889.5 621.5V629.6M1898.5 572.9V598.2M1901.5 551.7V586.5M1906.5 538.0V555.1M1908.5 541.2V554.3M1909.5 548.1V566.0M1911.5 544.7V556.5M1915.5 533.5V541.4M1916.5 540.1V545.5M1917.5 536.0V544.7M1918.5 540.8V549.6M1920.5 529.0V552.7M1921.5 546.2V559.4M1922.5 553.0V567.4M1924.5 548.6V581.6M1925.5 571.1V605.3M1927.5 591.4V610.3M1928.5 604.7V627.9M1931.5 573.3V590.7M1932.5 585.5V640.0M1933.5 584.6V601.8M1934.5 594.8V647.7M1937.5 623.5V654.2M1939.5 638.4V680.2M1941.5 655.2V658.2M1942.5 655.0V672.5M1944.5 653.5V675.3M1945.5 665.0V684.0M1946.5 680.3V689.2M1947.5 684.9V689.0M1949.5 674.2V688.2M1950.5 678.0V698.1M1954.5 675.2V680.1M1955.5 677.9V690.5M1956.5 688.1V691.1M1961.5 676.5V682.9M1964.5 671.8V682.4M1967.5 662.0V678.0M1968.5 665.3V670.9M1969.5 665.4V678.0M1971.5 667.5V674.3M1976.5 640.6V663.8M1979.5 631.7V652.4M1980.5 643.1V651.6M1981.5 645.2V653.7M1988.5 608.2V630.3M1990.5 616.2V637.1M1991.5 621.5V665.1M1994.5 638.6V673.1M1996.5 639.1V665.3M1997.5 655.4V680.1M1998.5 676.1V687.4M2001.5 657.6V664.9M2002.5 649.0V676.0M2005.5 644.8V657.0M2008.5 646.3V665.2M2009.5 658.2V664.3M2010.5 661.4V670.2M2014.5 637.5V646.0M2015.5 640.3V648.4M2016.5 644.4V652.0M2017.5 645.7V656.5M2019.5 641.5V654.7M2022.5 643.7V654.1M2024.5 639.7V650.4M2025.5 647.1V658.2M2029.5 637.7V641.3M2033.5 630.3V637.7M2037.5 626.9V634.2M2038.5 631.7V634.7M2041.5 624.4V629.5M2042.5 626.3V630.4M2043.5 628.2V632.8M2045.5 627.5V635.2M2047.5 625.9V631.1M2048.5 629.1V633.8M2049.5 628.3V635.0M2050.5 631.2V637.6M2051.5 635.4V648.3M2053.5 634.4V675.0M2054.5 659.0V674.5M2056.5 658.2V674.6M2057.5 672.7V710.9M2058.5 701.1V708.1M2059.5 701.6V725.9M2061.5 689.3V703.2M2063.5 687.9V717.6M2065.5 685.9V696.6M2066.5 690.7V696.4M2067.5 689.6V695.8M2068.5 693.3V710.8M2069.5 709.9V722.0M2072.5 693.4V705.3M2073.5 702.3V712.8M2074.5 709.8V728.8M2076.5 723.2V727.6M2078.5 690.0V725.0M2080.5 688.5V719.4M2082.5 688.8V712.9M2085.5 692.8V703.5M2087.5 692.4V705.1M2089.5 694.4V705.8M2091.5 698.3V713.2M2096.5 678.4V700.5M2103.5 667.0V678.0M2107.5 664.2V673.6M2108.5 672.0V675.8M2110.5 670.0V682.1M2112.5 672.5V682.6M2114.5 674.4V684.3M2116.5 668.4V675.1M2117.5 670.6V683.9M2119.5 672.6V686.5M2121.5 671.1V693.3M2122.5 692.1V711.7M2124.5 678.7V719.8M2126.5 696.3V705.3M2127.5 702.9V723.2M2129.5 689.8V698.8M2130.5 696.9V700.2M2131.5 695.8V706.7M2132.5 700.1V722.0M2133.5 715.1V727.5M2134.5 723.3V728.3M2135.5 722.1V731.5M2137.5 719.1V737.1M2139.5 726.0V738.2M2141.5 728.4V749.6M2144.5 733.3V744.9M2145.5 736.0V750.6M2147.5 743.6V754.2M2148.5 748.0V767.0M2149.5 753.2V757.9M2152.5 740.5V765.2M2153.5 762.3V768.9M2155.5 757.0V767.0M2159.5 741.5V751.8M2161.5 738.8V746.1M2163.5 734.6V750.5M2164.5 735.0V754.9M2172.5 730.2V736.3M2174.5 724.6V728.9M2175.5 725.3V731.1M2177.5 724.9V735.0M2178.5 730.3V736.2M2181.5 724.5V727.6M2182.5 725.6V729.2M2184.5 721.0V728.1M2186.5 719.0V729.0M2188.5 722.0V725.8M2189.5 725.5V732.8M2190.5 731.3V734.5M2192.5 731.3V740.8M2194.5 724.6V729.1M2195.5 726.2V736.5M2198.5 723.4V741.8M2199.5 729.0V753.1M2200.5 747.8V755.5M2203.5 736.8V743.9M2204.5 742.0V753.9M2205.5 749.3V759.7M2206.5 750.4V768.3M2207.5 760.2V769.8M2210.5 741.8V756.5M2212.5 729.1V759.4M2214.5 729.0V755.8M2215.5 742.6V757.6M2218.5 712.3V742.8M2219.5 735.2V744.9M2223.5 703.1V708.7M2224.5 703.9V707.0M2225.5 700.5V710.0M2229.5 674.7V688.5M2231.5 676.4V683.4M2232.5 679.8V690.9M2233.5 686.9V692.7M2234.5 690.4V693.4M2238.5 677.1V683.6M2240.5 677.0V682.7M2241.5 681.0V684.0M2243.5 674.4V681.0M2246.5 673.0V678.9M2248.5 676.9V679.9M2251.5 671.7V679.1M2253.5 673.6V676.6M2254.5 674.0V677.0M2255.5 675.0V684.0M2257.5 676.2V682.2M2259.5 676.8V683.8M2260.5 681.9V684.9M2261.5 681.4V691.7M2262.5 688.3V694.1M2264.5 682.1V695.0M2265.5 684.3V690.1M2268.5 684.2V694.4M2273.5 678.7V682.5M2275.5 671.5V676.1M2277.5 656.0V682.0M2281.5 632.1V648.7M2283.5 632.4V645.4M2284.5 640.1V659.8M2285.5 652.8V661.5M2288.5 622.8V653.9M2289.5 651.2V655.4M2292.5 636.4V652.6M2294.5 624.8V643.9M2296.5 621.0V642.5M2298.5 626.2V641.2M2301.5 618.2V638.2M2307.5 607.2V614.0M2308.5 610.2V622.1M2310.5 607.0V612.6M2314.5 606.3V623.5M2321.5 603.9V607.0M2322.5 605.7V608.7M2325.5 597.2V605.0M2327.5 597.1V602.7M2328.5 601.9V606.8M2332.5 598.5V603.2M2333.5 602.5V607.0M2335.5 601.3V610.6M2336.5 608.5V611.5M2339.5 602.9V606.8M2341.5 601.1V605.2M2342.5 603.0V606.0M2345.5 598.1V602.6M2347.5 598.7V602.1M2348.5 598.6V605.6M2351.5 595.5V601.3M2352.5 597.3V603.1M2353.5 597.8V614.3M2355.5 597.9V614.6M2356.5 608.8V632.0M2357.5 605.0V638.2M2359.5 619.2V631.7M2360.5 624.4V633.4M2361.5 629.4V635.3M2366.5 601.2V627.0M2367.5 620.0V628.1M2370.5 599.1V606.7M2372.5 601.9V609.1M2374.5 597.8V618.9M2375.5 612.2V624.8M2377.5 603.6V616.8M2378.5 611.9V615.2M2381.5 603.3V609.9M2383.5 600.9V618.4M2392.5 549.0V602.0M2393.5 579.5V613.1M2395.5 583.6V649.0M2396.5 600.6V621.8M2399.5 607.3V620.3M2400.5 612.3V626.6M2401.5 623.6V643.0M2402.5 624.3V638.4M2403.5 633.4V644.6M2405.5 636.1V639.1M2407.5 636.4V645.5M2410.5 629.6V639.7M2413.5 629.1V639.9M2414.5 635.0V642.6M2417.5 621.9V634.8M2422.5 618.3V621.3M2423.5 616.0V623.7M2425.5 619.5V622.5M2426.5 620.1V637.5M2427.5 634.3V654.0M2428.5 647.7V654.5M2429.5 646.8V662.8M2431.5 640.9V687.0M2432.5 669.2V700.5M2435.5 661.0V700.9M2437.5 663.7V710.2M2438.5 684.0V731.3M2441.5 691.6V718.3M2443.5 699.1V739.8M2444.5 733.1V749.4M2446.5 734.3V755.7M2447.5 745.7V762.8M2448.5 757.7V772.9M2449.5 768.7V777.6M2450.5 769.9V775.0M2451.5 771.7V781.0M2456.5 714.6V748.0M2457.5 737.5V753.0M2460.5 711.4V725.4M2461.5 718.3V745.1M2463.5 735.0V747.6M2465.5 725.1V737.0M2466.5 735.2V745.8M2467.5 741.5V746.9M2471.5 722.6V737.0M2473.5 727.5V733.3M2474.5 729.6V743.2M2477.5 723.1V740.8M2481.5 723.4V727.8M2482.5 726.5V730.4M2483.5 727.5V738.6M2484.5 737.2V742.1M2485.5 739.3V754.6M2486.5 749.7V760.4M2487.5 756.6V765.6M2488.5 760.6V763.6M2491.5 741.9V760.2M2497.5 739.5V751.9M2504.5 700.5V728.5M2506.5 707.1V722.0M2508.5 706.9V713.3M2509.5 708.5V715.4M2511.5 681.0V707.2M2515.5 687.0V696.0M2517.5 681.9V701.0M2519.5 662.0V693.8M2522.5 655.8V693.7M2523.5 689.1V706.4M2525.5 687.2V701.7M2526.5 695.4V706.1M2527.5 701.4V704.4M2530.5 663.6V689.1M2531.5 683.8V715.1M2533.5 693.9V722.4M2535.5 701.3V707.8M2539.5 689.4V715.4M2541.5 690.7V710.0M2543.5 674.8V687.9M2549.5 671.1V674.1M2553.5 663.9V666.9M2554.5 666.1V670.3M2556.5 668.2V672.8M2557.5 671.8V674.8M2558.5 673.6V676.9M2560.5 673.1V679.7M2562.5 679.1V683.9M2565.5 678.2V681.9M2568.5 678.6V682.4M2570.5 681.7V684.7M2573.5 680.5V684.9M2575.5 678.4V686.1M2576.5 682.3V685.4M2578.5 678.7V693.3M2579.5 684.1V715.3M2581.5 682.5V704.3M2582.5 696.9V720.6M2583.5 711.3V744.4M2584.5 740.3V786.0M2585.5 764.7V784.2M2586.5 778.9V792.3M2587.5 791.2V843.0M2588.5 799.8V838.3M2589.5 830.9V848.5M2590.5 839.6V847.9M2594.5 810.9V824.6M2595.5 813.9V849.0M2596.5 831.5V843.1M2598.5 836.4V843.2M2599.5 835.9V863.4M2601.5 826.0V856.6M2604.5 830.0V868.0M2605.5 845.6V860.8M2607.5 842.9V863.6M2612.5 829.5V837.5M2613.5 835.9V838.9M2618.5 820.1V832.4" stroke="#e06262" stroke-width="1" fill="none" shape-rendering="crispEdges"/><path transform="translate(1070.0,849.0)" d="M-2.5 6.3 H2.5 V-0.2 H5.5 L0 -6.3 L-5.5 -0.2 H-2.5 Z" fill="#2fb52f" stroke="#0a6a0a" stroke-width="1"/><g transform="translate(1108.0,781.0)"><path d="M-3.6 -3.6L3.6 3.6M3.6 -3.6L-3.6 3.6" stroke="#b81414" stroke-width="5.2" stroke-linecap="round"/><path d="M-3.6 -3.6L3.6 3.6M3.6 -3.6L-3.6 3.6" stroke="#ee3a3a" stroke-width="3.2" stroke-linecap="round"/></g><path transform="translate(1223.0,671.0)" d="M-2.5 6.3 H2.5 V-0.2 H5.5 L0 -6.3 L-5.5 -0.2 H-2.5 Z" fill="#2fb52f" stroke="#0a6a0a" stroke-width="1"/><g transform="translate(1261.0,578.0)"><path d="M-3.6 -3.6L3.6 3.6M3.6 -3.6L-3.6 3.6" stroke="#b81414" stroke-width="5.2" stroke-linecap="round"/><path d="M-3.6 -3.6L3.6 3.6M3.6 -3.6L-3.6 3.6" stroke="#ee3a3a" stroke-width="3.2" stroke-linecap="round"/></g><path transform="translate(1303.0,610.0)" d="M-2.5 -6.3 H2.5 V0.2 H5.5 L0 6.3 L-5.5 0.2 H-2.5 Z" fill="#ee3a3a" stroke="#b01010" stroke-width="1"/><path transform="translate(1322.0,620.0)" d="M-2.5 6.3 H2.5 V-0.2 H5.5 L0 -6.3 L-5.5 -0.2 H-2.5 Z" fill="#2fb52f" stroke="#0a6a0a" stroke-width="1"/><g transform="translate(1322.0,640.0)"><path d="M-3.6 -3.6L3.6 3.6M3.6 -3.6L-3.6 3.6" stroke="#0a7a0a" stroke-width="5.2" stroke-linecap="round"/><path d="M-3.6 -3.6L3.6 3.6M3.6 -3.6L-3.6 3.6" stroke="#3cc23c" stroke-width="3.2" stroke-linecap="round"/></g><g transform="translate(1337.0,580.0)"><path d="M-3.6 -3.6L3.6 3.6M3.6 -3.6L-3.6 3.6" stroke="#b81414" stroke-width="5.2" stroke-linecap="round"/><path d="M-3.6 -3.6L3.6 3.6M3.6 -3.6L-3.6 3.6" stroke="#ee3a3a" stroke-width="3.2" stroke-linecap="round"/></g><path transform="translate(1371.0,610.0)" d="M-2.5 -6.3 H2.5 V0.2 H5.5 L0 6.3 L-5.5 0.2 H-2.5 Z" fill="#ee3a3a" stroke="#b01010" stroke-width="1"/><g transform="translate(1386.0,610.0)"><path d="M-3.6 -3.6L3.6 3.6M3.6 -3.6L-3.6 3.6" stroke="#b81414" stroke-width="5.2" stroke-linecap="round"/><path d="M-3.6 -3.6L3.6 3.6M3.6 -3.6L-3.6 3.6" stroke="#ee3a3a" stroke-width="3.2" stroke-linecap="round"/></g><path transform="translate(1381.0,632.0)" d="M-2.5 6.3 H2.5 V-0.2 H5.5 L0 -6.3 L-5.5 -0.2 H-2.5 Z" fill="#2fb52f" stroke="#0a6a0a" stroke-width="1"/><g transform="translate(1381.0,652.0)"><path d="M-3.6 -3.6L3.6 3.6M3.6 -3.6L-3.6 3.6" stroke="#0a7a0a" stroke-width="5.2" stroke-linecap="round"/><path d="M-3.6 -3.6L3.6 3.6M3.6 -3.6L-3.6 3.6" stroke="#3cc23c" stroke-width="3.2" stroke-linecap="round"/></g><g transform="translate(1525.0,675.0)"><path d="M-3.6 -3.6L3.6 3.6M3.6 -3.6L-3.6 3.6" stroke="#b81414" stroke-width="5.2" stroke-linecap="round"/><path d="M-3.6 -3.6L3.6 3.6M3.6 -3.6L-3.6 3.6" stroke="#ee3a3a" stroke-width="3.2" stroke-linecap="round"/></g><path transform="translate(1525.0,695.0)" d="M-2.5 -6.3 H2.5 V0.2 H5.5 L0 6.3 L-5.5 0.2 H-2.5 Z" fill="#ee3a3a" stroke="#b01010" stroke-width="1"/><path transform="translate(1523.0,715.0)" d="M-2.5 6.3 H2.5 V-0.2 H5.5 L0 -6.3 L-5.5 -0.2 H-2.5 Z" fill="#2fb52f" stroke="#0a6a0a" stroke-width="1"/><g transform="translate(1541.0,707.0)"><path d="M-3.6 -3.6L3.6 3.6M3.6 -3.6L-3.6 3.6" stroke="#0a7a0a" stroke-width="5.2" stroke-linecap="round"/><path d="M-3.6 -3.6L3.6 3.6M3.6 -3.6L-3.6 3.6" stroke="#3cc23c" stroke-width="3.2" stroke-linecap="round"/></g><path transform="translate(1600.0,672.0)" d="M-2.5 6.3 H2.5 V-0.2 H5.5 L0 -6.3 L-5.5 -0.2 H-2.5 Z" fill="#2fb52f" stroke="#0a6a0a" stroke-width="1"/><g transform="translate(1638.0,626.0)"><path d="M-3.6 -3.6L3.6 3.6M3.6 -3.6L-3.6 3.6" stroke="#b81414" stroke-width="5.2" stroke-linecap="round"/><path d="M-3.6 -3.6L3.6 3.6M3.6 -3.6L-3.6 3.6" stroke="#ee3a3a" stroke-width="3.2" stroke-linecap="round"/></g><path transform="translate(1677.0,668.0)" d="M-2.5 -6.3 H2.5 V0.2 H5.5 L0 6.3 L-5.5 0.2 H-2.5 Z" fill="#ee3a3a" stroke="#b01010" stroke-width="1"/><g transform="translate(1714.0,774.0)"><path d="M-3.6 -3.6L3.6 3.6M3.6 -3.6L-3.6 3.6" stroke="#0a7a0a" stroke-width="5.2" stroke-linecap="round"/><path d="M-3.6 -3.6L3.6 3.6M3.6 -3.6L-3.6 3.6" stroke="#3cc23c" stroke-width="3.2" stroke-linecap="round"/></g><path transform="translate(1750.0,678.0)" d="M-2.5 -6.3 H2.5 V0.2 H5.5 L0 6.3 L-5.5 0.2 H-2.5 Z" fill="#ee3a3a" stroke="#b01010" stroke-width="1"/><g transform="translate(1788.0,741.0)"><path d="M-3.6 -3.6L3.6 3.6M3.6 -3.6L-3.6 3.6" stroke="#0a7a0a" stroke-width="5.2" stroke-linecap="round"/><path d="M-3.6 -3.6L3.6 3.6M3.6 -3.6L-3.6 3.6" stroke="#3cc23c" stroke-width="3.2" stroke-linecap="round"/></g><path transform="translate(1826.0,678.0)" d="M-2.5 6.3 H2.5 V-0.2 H5.5 L0 -6.3 L-5.5 -0.2 H-2.5 Z" fill="#2fb52f" stroke="#0a6a0a" stroke-width="1"/><g transform="translate(1864.0,630.0)"><path d="M-3.6 -3.6L3.6 3.6M3.6 -3.6L-3.6 3.6" stroke="#b81414" stroke-width="5.2" stroke-linecap="round"/><path d="M-3.6 -3.6L3.6 3.6M3.6 -3.6L-3.6 3.6" stroke="#ee3a3a" stroke-width="3.2" stroke-linecap="round"/></g><path transform="translate(1902.0,544.0)" d="M-2.5 -6.3 H2.5 V0.2 H5.5 L0 6.3 L-5.5 0.2 H-2.5 Z" fill="#ee3a3a" stroke="#b01010" stroke-width="1"/><path transform="translate(1910.0,563.0)" d="M-2.5 6.3 H2.5 V-0.2 H5.5 L0 -6.3 L-5.5 -0.2 H-2.5 Z" fill="#2fb52f" stroke="#0a6a0a" stroke-width="1"/><g transform="translate(1910.0,583.0)"><path d="M-3.6 -3.6L3.6 3.6M3.6 -3.6L-3.6 3.6" stroke="#0a7a0a" stroke-width="5.2" stroke-linecap="round"/><path d="M-3.6 -3.6L3.6 3.6M3.6 -3.6L-3.6 3.6" stroke="#3cc23c" stroke-width="3.2" stroke-linecap="round"/></g><g transform="translate(1923.0,548.0)"><path d="M-3.6 -3.6L3.6 3.6M3.6 -3.6L-3.6 3.6" stroke="#b81414" stroke-width="5.2" stroke-linecap="round"/><path d="M-3.6 -3.6L3.6 3.6M3.6 -3.6L-3.6 3.6" stroke="#ee3a3a" stroke-width="3.2" stroke-linecap="round"/></g><g transform="translate(1990.0,618.0)"><path d="M-3.6 -3.6L3.6 3.6M3.6 -3.6L-3.6 3.6" stroke="#b81414" stroke-width="5.2" stroke-linecap="round"/><path d="M-3.6 -3.6L3.6 3.6M3.6 -3.6L-3.6 3.6" stroke="#ee3a3a" stroke-width="3.2" stroke-linecap="round"/></g><path transform="translate(1984.0,635.0)" d="M-2.5 6.3 H2.5 V-0.2 H5.5 L0 -6.3 L-5.5 -0.2 H-2.5 Z" fill="#2fb52f" stroke="#0a6a0a" stroke-width="1"/><path transform="translate(1990.0,637.0)" d="M-2.5 -6.3 H2.5 V0.2 H5.5 L0 6.3 L-5.5 0.2 H-2.5 Z" fill="#ee3a3a" stroke="#b01010" stroke-width="1"/><g transform="translate(2016.0,675.0)"><path d="M-3.6 -3.6L3.6 3.6M3.6 -3.6L-3.6 3.6" stroke="#0a7a0a" stroke-width="5.2" stroke-linecap="round"/><path d="M-3.6 -3.6L3.6 3.6M3.6 -3.6L-3.6 3.6" stroke="#3cc23c" stroke-width="3.2" stroke-linecap="round"/></g><path transform="translate(2056.0,677.0)" d="M-2.5 -6.3 H2.5 V0.2 H5.5 L0 6.3 L-5.5 0.2 H-2.5 Z" fill="#ee3a3a" stroke="#b01010" stroke-width="1"/><g transform="translate(2092.0,714.0)"><path d="M-3.6 -3.6L3.6 3.6M3.6 -3.6L-3.6 3.6" stroke="#0a7a0a" stroke-width="5.2" stroke-linecap="round"/><path d="M-3.6 -3.6L3.6 3.6M3.6 -3.6L-3.6 3.6" stroke="#3cc23c" stroke-width="3.2" stroke-linecap="round"/></g><path transform="translate(2130.0,692.0)" d="M-2.5 -6.3 H2.5 V0.2 H5.5 L0 6.3 L-5.5 0.2 H-2.5 Z" fill="#ee3a3a" stroke="#b01010" stroke-width="1"/><g transform="translate(2166.0,755.0)"><path d="M-3.6 -3.6L3.6 3.6M3.6 -3.6L-3.6 3.6" stroke="#0a7a0a" stroke-width="5.2" stroke-linecap="round"/><path d="M-3.6 -3.6L3.6 3.6M3.6 -3.6L-3.6 3.6" stroke="#3cc23c" stroke-width="3.2" stroke-linecap="round"/></g><g transform="translate(2204.0,704.0)"><path d="M-3.6 -3.6L3.6 3.6M3.6 -3.6L-3.6 3.6" stroke="#b81414" stroke-width="5.2" stroke-linecap="round"/><path d="M-3.6 -3.6L3.6 3.6M3.6 -3.6L-3.6 3.6" stroke="#ee3a3a" stroke-width="3.2" stroke-linecap="round"/></g><path transform="translate(2204.0,724.0)" d="M-2.5 -6.3 H2.5 V0.2 H5.5 L0 6.3 L-5.5 0.2 H-2.5 Z" fill="#ee3a3a" stroke="#b01010" stroke-width="1"/><path transform="translate(2203.0,748.0)" d="M-2.5 6.3 H2.5 V-0.2 H5.5 L0 -6.3 L-5.5 -0.2 H-2.5 Z" fill="#2fb52f" stroke="#0a6a0a" stroke-width="1"/><g transform="translate(2213.0,753.0)"><path d="M-3.6 -3.6L3.6 3.6M3.6 -3.6L-3.6 3.6" stroke="#0a7a0a" stroke-width="5.2" stroke-linecap="round"/><path d="M-3.6 -3.6L3.6 3.6M3.6 -3.6L-3.6 3.6" stroke="#3cc23c" stroke-width="3.2" stroke-linecap="round"/></g><path transform="translate(2279.0,657.0)" d="M-2.5 6.3 H2.5 V-0.2 H5.5 L0 -6.3 L-5.5 -0.2 H-2.5 Z" fill="#2fb52f" stroke="#0a6a0a" stroke-width="1"/><g transform="translate(2318.0,594.0)"><path d="M-3.6 -3.6L3.6 3.6M3.6 -3.6L-3.6 3.6" stroke="#b81414" stroke-width="5.2" stroke-linecap="round"/><path d="M-3.6 -3.6L3.6 3.6M3.6 -3.6L-3.6 3.6" stroke="#ee3a3a" stroke-width="3.2" stroke-linecap="round"/></g><g transform="translate(2356.0,583.0)"><path d="M-3.6 -3.6L3.6 3.6M3.6 -3.6L-3.6 3.6" stroke="#b81414" stroke-width="5.2" stroke-linecap="round"/><path d="M-3.6 -3.6L3.6 3.6M3.6 -3.6L-3.6 3.6" stroke="#ee3a3a" stroke-width="3.2" stroke-linecap="round"/></g><path transform="translate(2356.0,602.0)" d="M-2.5 -6.3 H2.5 V0.2 H5.5 L0 6.3 L-5.5 0.2 H-2.5 Z" fill="#ee3a3a" stroke="#b01010" stroke-width="1"/><path transform="translate(2355.0,625.0)" d="M-2.5 6.3 H2.5 V-0.2 H5.5 L0 -6.3 L-5.5 -0.2 H-2.5 Z" fill="#2fb52f" stroke="#0a6a0a" stroke-width="1"/><g transform="translate(2365.0,621.0)"><path d="M-3.6 -3.6L3.6 3.6M3.6 -3.6L-3.6 3.6" stroke="#0a7a0a" stroke-width="5.2" stroke-linecap="round"/><path d="M-3.6 -3.6L3.6 3.6M3.6 -3.6L-3.6 3.6" stroke="#3cc23c" stroke-width="3.2" stroke-linecap="round"/></g><g transform="translate(2434.0,629.0)"><path d="M-3.6 -3.6L3.6 3.6M3.6 -3.6L-3.6 3.6" stroke="#b81414" stroke-width="5.2" stroke-linecap="round"/><path d="M-3.6 -3.6L3.6 3.6M3.6 -3.6L-3.6 3.6" stroke="#ee3a3a" stroke-width="3.2" stroke-linecap="round"/></g><path transform="translate(2434.0,648.0)" d="M-2.5 -6.3 H2.5 V0.2 H5.5 L0 6.3 L-5.5 0.2 H-2.5 Z" fill="#ee3a3a" stroke="#b01010" stroke-width="1"/><path transform="translate(2432.0,673.0)" d="M-2.5 6.3 H2.5 V-0.2 H5.5 L0 -6.3 L-5.5 -0.2 H-2.5 Z" fill="#2fb52f" stroke="#0a6a0a" stroke-width="1"/><g transform="translate(2470.0,755.0)"><path d="M-3.6 -3.6L3.6 3.6M3.6 -3.6L-3.6 3.6" stroke="#0a7a0a" stroke-width="5.2" stroke-linecap="round"/><path d="M-3.6 -3.6L3.6 3.6M3.6 -3.6L-3.6 3.6" stroke="#3cc23c" stroke-width="3.2" stroke-linecap="round"/></g><path transform="translate(2509.0,730.0)" d="M-2.5 6.3 H2.5 V-0.2 H5.5 L0 -6.3 L-5.5 -0.2 H-2.5 Z" fill="#2fb52f" stroke="#0a6a0a" stroke-width="1"/><g transform="translate(2544.0,676.0)"><path d="M-3.6 -3.6L3.6 3.6M3.6 -3.6L-3.6 3.6" stroke="#b81414" stroke-width="5.2" stroke-linecap="round"/><path d="M-3.6 -3.6L3.6 3.6M3.6 -3.6L-3.6 3.6" stroke="#ee3a3a" stroke-width="3.2" stroke-linecap="round"/></g></svg>
<div class="t" style="left:1232px;top:507px;width:60px;height:17px;background:#f5c6cc;border:1px solid #f0a2aa;border-top:none;border-radius:0 0 4px 4px;overflow:hidden;line-height:15px;text-indent:2px">2@4 658,4</div>
<div class="t" style="left:1292px;top:507px;width:41px;height:17px;background:#f5c6cc;border:1px solid #f0a2aa;border-top:none;border-radius:0 0 4px 4px;overflow:hidden;line-height:15px;text-indent:2px">4 626,9</div>
<div class="t" style="left:1333px;top:507px;width:34px;height:17px;background:#f5c6cc;border:1px solid #f0a2aa;border-top:none;border-radius:0 0 4px 4px;overflow:hidden;line-height:15px;text-indent:2px">662,3</div>
<div class="t" style="left:1367px;top:507px;width:34px;height:17px;background:#f5c6cc;border:1px solid #f0a2aa;border-top:none;border-radius:0 0 4px 4px;overflow:hidden;line-height:15px;text-indent:2px">634,8</div>
<div class="t" style="left:1401px;top:507px;width:16px;height:17px;background:#f5c6cc;border:1px solid #f0a2aa;border-top:none;border-radius:0 0 4px 4px;overflow:hidden;line-height:15px;text-indent:2px">4,8</div>
<div class="t" style="left:1502px;top:507px;width:47px;height:17px;background:#f5c6cc;border:1px solid #f0a2aa;border-top:none;border-radius:0 0 4px 4px;overflow:hidden;line-height:15px;text-indent:2px">2 ordres</div>
<div class="t" style="left:1609px;top:507px;width:60px;height:17px;background:#f5c6cc;border:1px solid #f0a2aa;border-top:none;border-radius:0 0 4px 4px;overflow:hidden;line-height:15px;text-indent:2px">2@4 619,6</div>
<div class="t" style="left:1669px;top:507px;width:38px;height:17px;background:#f5c6cc;border:1px solid #f0a2aa;border-top:none;border-radius:0 0 4px 4px;overflow:hidden;line-height:15px;text-indent:2px">4 579,6</div>
<div class="t" style="left:1722px;top:507px;width:58px;height:17px;background:#f5c6cc;border:1px solid #f0a2aa;border-top:none;border-radius:0 0 4px 4px;overflow:hidden;line-height:15px;text-indent:2px">2@4 569,7</div>
<div class="t" style="left:1835px;top:507px;width:59px;height:17px;background:#f5c6cc;border:1px solid #f0a2aa;border-top:none;border-radius:0 0 4px 4px;overflow:hidden;line-height:15px;text-indent:2px">2@4 617,5</div>
<div class="t" style="left:1894px;top:507px;width:38px;height:17px;background:#f5c6cc;border:1px solid #f0a2aa;border-top:none;border-radius:0 0 4px 4px;overflow:hidden;line-height:15px;text-indent:2px">4 695,3</div>
<div class="t" style="left:1932px;top:507px;width:22px;height:17px;background:#f5c6cc;border:1px solid #f0a2aa;border-top:none;border-radius:0 0 4px 4px;overflow:hidden;line-height:15px;text-indent:2px">95,3</div>
<div class="t" style="left:1967px;top:507px;width:48px;height:17px;background:#f5c6cc;border:1px solid #f0a2aa;border-top:none;border-radius:0 0 4px 4px;overflow:hidden;line-height:15px;text-indent:2px">2 ordres</div>
<div class="t" style="left:2027px;top:507px;width:59px;height:17px;background:#f5c6cc;border:1px solid #f0a2aa;border-top:none;border-radius:0 0 4px 4px;overflow:hidden;line-height:15px;text-indent:2px">2@4 574,5</div>
<div class="t" style="left:2101px;top:507px;width:60px;height:17px;background:#f5c6cc;border:1px solid #f0a2aa;border-top:none;border-radius:0 0 4px 4px;overflow:hidden;line-height:15px;text-indent:2px">2@4 554,3</div>
<div class="t" style="left:2181px;top:507px;width:48px;height:17px;background:#f5c6cc;border:1px solid #f0a2aa;border-top:none;border-radius:0 0 4px 4px;overflow:hidden;line-height:15px;text-indent:2px">2 ordres</div>
<div class="t" style="left:2289px;top:507px;width:59px;height:17px;background:#f5c6cc;border:1px solid #f0a2aa;border-top:none;border-radius:0 0 4px 4px;overflow:hidden;line-height:15px;text-indent:2px">2@4 655,0</div>
<div class="t" style="left:2348px;top:507px;width:32px;height:17px;background:#f5c6cc;border:1px solid #f0a2aa;border-top:none;border-radius:0 0 4px 4px;overflow:hidden;line-height:15px;text-indent:2px">ordres</div>
<div class="t" style="left:2411px;top:507px;width:47px;height:17px;background:#f5c6cc;border:1px solid #f0a2aa;border-top:none;border-radius:0 0 4px 4px;overflow:hidden;line-height:15px;text-indent:2px">2 ordres</div>
<div class="t" style="left:2515px;top:507px;width:59px;height:17px;background:#f5c6cc;border:1px solid #f0a2aa;border-top:none;border-radius:0 0 4px 4px;overflow:hidden;line-height:15px;text-indent:2px">2@4 570,0</div>
<div class="t" style="left:1116px;top:507px;width:23px;height:17px;background:#f5c6cc;border:1px solid #f0a2aa;border-top:none;border-radius:0 0 4px 4px;overflow:hidden;line-height:15px;text-indent:2px">3¾</div>
<div class="t" style="left:1121px;top:508px;line-height:15px;">Vente : 4 457,5 Achat : 4 459,5</div>
<div class="t" style="left:1055px;top:921px;width:45px;height:17px;background:#c2ecc4;border:1px solid #3ec23e;border-bottom:none;border-radius:4px 4px 0 0;overflow:hidden;line-height:17px;text-indent:2px">2d 475,1</div>
<div class="t" style="left:1194px;top:921px;width:59px;height:17px;background:#c2ecc4;border:1px solid #3ec23e;border-bottom:none;border-radius:4px 4px 0 0;overflow:hidden;line-height:17px;text-indent:2px">2@4 616,8</div>
<div class="t" style="left:1300px;top:921px;width:46px;height:17px;background:#c2ecc4;border:1px solid #3ec23e;border-bottom:none;border-radius:4px 4px 0 0;overflow:hidden;line-height:17px;text-indent:2px">2 ordres</div>
<div class="t" style="left:1359px;top:921px;width:46px;height:17px;background:#c2ecc4;border:1px solid #3ec23e;border-bottom:none;border-radius:4px 4px 0 0;overflow:hidden;line-height:17px;text-indent:2px">2 ordres</div>
<div class="t" style="left:1494px;top:921px;width:59px;height:17px;background:#c2ecc4;border:1px solid #3ec23e;border-bottom:none;border-radius:4px 4px 0 0;overflow:hidden;line-height:17px;text-indent:2px">2@4 580,6</div>
<div class="t" style="left:1553px;top:921px;width:19px;height:17px;background:#c2ecc4;border:1px solid #3ec23e;border-bottom:none;border-radius:4px 4px 0 0;overflow:hidden;line-height:17px;text-indent:2px">0,6</div>
<div class="t" style="left:1572px;top:921px;width:58px;height:17px;background:#c2ecc4;border:1px solid #3ec23e;border-bottom:none;border-radius:4px 4px 0 0;overflow:hidden;line-height:17px;text-indent:2px">2@4 611,3</div>
<div class="t" style="left:1685px;top:921px;width:59px;height:17px;background:#c2ecc4;border:1px solid #3ec23e;border-bottom:none;border-radius:4px 4px 0 0;overflow:hidden;line-height:17px;text-indent:2px">2@4 520,4</div>
<div class="t" style="left:1760px;top:921px;width:59px;height:17px;background:#c2ecc4;border:1px solid #3ec23e;border-bottom:none;border-radius:4px 4px 0 0;overflow:hidden;line-height:17px;text-indent:2px">2@4 544,4</div>
<div class="t" style="left:1819px;top:921px;width:37px;height:17px;background:#c2ecc4;border:1px solid #3ec23e;border-bottom:none;border-radius:4px 4px 0 0;overflow:hidden;line-height:17px;text-indent:2px">4 607,6</div>
<div class="t" style="left:1888px;top:921px;width:46px;height:17px;background:#c2ecc4;border:1px solid #3ec23e;border-bottom:none;border-radius:4px 4px 0 0;overflow:hidden;line-height:17px;text-indent:2px">2 ordres</div>
<div class="t" style="left:1956px;top:921px;width:59px;height:17px;background:#c2ecc4;border:1px solid #3ec23e;border-bottom:none;border-radius:4px 4px 0 0;overflow:hidden;line-height:17px;text-indent:2px">2@4 644,8</div>
<div class="t" style="left:2015px;top:921px;width:31px;height:17px;background:#c2ecc4;border:1px solid #3ec23e;border-bottom:none;border-radius:4px 4px 0 0;overflow:hidden;line-height:17px;text-indent:2px">609,2</div>
<div class="t" style="left:2064px;top:921px;width:59px;height:17px;background:#c2ecc4;border:1px solid #3ec23e;border-bottom:none;border-radius:4px 4px 0 0;overflow:hidden;line-height:17px;text-indent:2px">2@4 570,3</div>
<div class="t" style="left:2137px;top:921px;width:59px;height:17px;background:#c2ecc4;border:1px solid #3ec23e;border-bottom:none;border-radius:4px 4px 0 0;overflow:hidden;line-height:17px;text-indent:2px">2@4 530,5</div>
<div class="t" style="left:2196px;top:921px;width:38px;height:17px;background:#c2ecc4;border:1px solid #3ec23e;border-bottom:none;border-radius:4px 4px 0 0;overflow:hidden;line-height:17px;text-indent:2px">4 545,0</div>
<div class="t" style="left:2234px;top:921px;width:9px;height:17px;background:#c2ecc4;border:1px solid #3ec23e;border-bottom:none;border-radius:4px 4px 0 0;overflow:hidden;line-height:17px;text-indent:2px">0</div>
<div class="t" style="left:2251px;top:921px;width:59px;height:17px;background:#c2ecc4;border:1px solid #3ec23e;border-bottom:none;border-radius:4px 4px 0 0;overflow:hidden;line-height:17px;text-indent:2px">2@4 634,5</div>
<div class="t" style="left:2327px;top:921px;width:58px;height:17px;background:#c2ecc4;border:1px solid #3ec23e;border-bottom:none;border-radius:4px 4px 0 0;overflow:hidden;line-height:17px;text-indent:2px">2@4 660,5</div>
<div class="t" style="left:2385px;top:921px;width:10px;height:17px;background:#c2ecc4;border:1px solid #3ec23e;border-bottom:none;border-radius:4px 4px 0 0;overflow:hidden;line-height:17px;text-indent:2px">5</div>
<div class="t" style="left:2404px;top:921px;width:58px;height:17px;background:#c2ecc4;border:1px solid #3ec23e;border-bottom:none;border-radius:4px 4px 0 0;overflow:hidden;line-height:17px;text-indent:2px">2@4 621,0</div>
<div class="t" style="left:2462px;top:921px;width:38px;height:17px;background:#c2ecc4;border:1px solid #3ec23e;border-bottom:none;border-radius:4px 4px 0 0;overflow:hidden;line-height:17px;text-indent:2px">4 533,3</div>
<div class="t" style="left:2500px;top:921px;width:39px;height:17px;background:#c2ecc4;border:1px solid #3ec23e;border-bottom:none;border-radius:4px 4px 0 0;overflow:hidden;line-height:17px;text-indent:2px">4 566,3</div>
<div class="t" style="left:1056px;top:922px;line-height:17px;">© IT-Finance.com&nbsp; <i>Données indicatives</i></div>
<div class="a" style="left:1055px;top:70px;width:336px;height:18px;background:linear-gradient(#d4eef9,#a9c4d0);border-right:1px solid #7d97a3;border-bottom:1px solid #7d97a3"></div>
<div class="t" style="left:1058px;top:72px;line-height:13px;letter-spacing:-0.1px">Courbe gains &amp; pertes : Breakout ProOrder actif - 15 minutes</div>
<div class="a" style="left:1055px;top:332px;width:325px;height:18px;background:linear-gradient(#d4eef9,#a9c4d0);border-right:1px solid #7d97a3;border-bottom:1px solid #7d97a3"></div>
<div class="t" style="left:1058px;top:334px;line-height:13px;letter-spacing:-0.1px">ProOrder - Positions : Breakout ProOrder actif - 15 minutes</div>
<div class="a" style="left:1055px;top:507px;width:61px;height:18px;background:linear-gradient(#d4eef9,#a9c4d0);border-right:1px solid #7d97a3;border-bottom:1px solid #7d97a3"></div>
<div class="t" style="left:1058px;top:509px;line-height:13px;letter-spacing:-0.1px">Prix</div>
<svg class="a" style="left:1356px;top:72px" width="13" height="13" viewBox="0 0 13 13"><rect x="0.8" y="0.8" width="11.4" height="11.4" rx="2" fill="#fff" stroke="#000" stroke-width="1.4"/><rect x="1" y="1" width="11" height="2.5" fill="#000"/></svg>
<svg class="a" style="left:1374px;top:72px" width="13" height="13" viewBox="0 0 13 13"><circle cx="6.5" cy="6.5" r="6.2" fill="#3a3a3a"/><path d="M4 4 L9 9 M9 4 L4 9" stroke="#fff" stroke-width="1.8"/></svg>
<svg class="a" style="left:1345px;top:334px" width="13" height="13" viewBox="0 0 13 13"><rect x="0.8" y="0.8" width="11.4" height="11.4" rx="2" fill="#fff" stroke="#000" stroke-width="1.4"/><rect x="1" y="1" width="11" height="2.5" fill="#000"/></svg>
<svg class="a" style="left:1363px;top:334px" width="13" height="13" viewBox="0 0 13 13"><circle cx="6.5" cy="6.5" r="6.2" fill="#3a3a3a"/><path d="M4 4 L9 9 M9 4 L4 9" stroke="#fff" stroke-width="1.8"/></svg>
<svg class="a" style="left:1099px;top:509px" width="13" height="13" viewBox="0 0 13 13"><rect x="0.8" y="0.8" width="11.4" height="11.4" rx="2" fill="#fff" stroke="#000" stroke-width="1.4"/><rect x="1" y="1" width="11" height="2.5" fill="#000"/></svg>
<svg class="a" style="left:1080px;top:508px" width="16" height="16" viewBox="0 0 16 16"><path d="M2.8 13.6 L9 7.4" stroke="#000" stroke-width="3.8" stroke-linecap="round"/><path d="M2.8 13.6 L9 7.4" stroke="#fff" stroke-width="1.7" stroke-linecap="round"/><path d="M7.6 9.2 A4.2 4.2 0 0 1 10 1.6 L10.6 4.6 L13.2 4.2 L14.2 1.8 A4.2 4.2 0 0 1 9.4 9.6Z" fill="#fff" stroke="#000" stroke-width="1.1" stroke-linejoin="round"/></svg>
<div class="t" style="left:1395px;top:73px;line-height:13px;">Vente : 4 457,5 Achat : 4 459,5</div>
<div class="t" style="left:1386px;top:335px;line-height:13px;">Vente : 4 457,5 Achat : 4 459,5</div>
<div class="a" style="left:2670px;top:77px;width:5px;height:1px;background:#6f8a96"></div>
<div class="t" style="left:2677px;top:70.6px;line-height:13px;">250</div>
<div class="a" style="left:2670px;top:100px;width:5px;height:1px;background:#6f8a96"></div>
<div class="t" style="left:2677px;top:93.8px;line-height:13px;">200</div>
<div class="a" style="left:2670px;top:123px;width:5px;height:1px;background:#6f8a96"></div>
<div class="t" style="left:2677px;top:116.7px;line-height:13px;">150</div>
<div class="a" style="left:2670px;top:146px;width:5px;height:1px;background:#6f8a96"></div>
<div class="t" style="left:2677px;top:139.6px;line-height:13px;">100</div>
<div class="a" style="left:2670px;top:169px;width:5px;height:1px;background:#6f8a96"></div>
<div class="t" style="left:2677px;top:162.8px;line-height:13px;">50</div>
<div class="a" style="left:2670px;top:215px;width:5px;height:1px;background:#6f8a96"></div>
<div class="t" style="left:2677px;top:208.5px;line-height:13px;">-50</div>
<div class="a" style="left:2670px;top:238px;width:5px;height:1px;background:#6f8a96"></div>
<div class="t" style="left:2677px;top:231.5px;line-height:13px;">-100</div>
<div class="a" style="left:2670px;top:284px;width:5px;height:1px;background:#6f8a96"></div>
<div class="t" style="left:2677px;top:277.5px;line-height:13px;">-200</div>
<div class="a" style="left:2670px;top:307px;width:5px;height:1px;background:#6f8a96"></div>
<div class="t" style="left:2677px;top:300.5px;line-height:13px;">-250</div>
<div class="a" style="left:2670px;top:192px;width:5px;height:1px;background:#6f8a96"></div>
<div class="t" style="left:2677px;top:185px;line-height:13px;font-weight:bold;font-size:12px">0</div>
<div class="a" style="left:2670px;top:258px;width:5px;height:1px;background:#6f8a96"></div>
<div class="a" style="left:2675px;top:250px;width:40px;height:16px;border:1px solid #6f8a96;background:linear-gradient(#ffffff,#d3dbf3)"></div>
<div class="t" style="left:2677px;top:251px;line-height:14px;color:#35b935">-143,80</div>
<div class="a" style="left:2670px;top:340px;width:5px;height:1px;background:#6f8a96"></div>
<div class="t" style="left:2677px;top:333.5px;line-height:13px;">2</div>
<div class="a" style="left:2670px;top:360px;width:5px;height:1px;background:#6f8a96"></div>
<div class="t" style="left:2677px;top:353.0px;line-height:13px;">1,5</div>
<div class="a" style="left:2670px;top:379px;width:5px;height:1px;background:#6f8a96"></div>
<div class="t" style="left:2677px;top:372.5px;line-height:13px;">1</div>
<div class="a" style="left:2670px;top:398px;width:5px;height:1px;background:#6f8a96"></div>
<div class="t" style="left:2677px;top:392.0px;line-height:13px;">0,5</div>
<div class="a" style="left:2670px;top:438px;width:5px;height:1px;background:#6f8a96"></div>
<div class="t" style="left:2677px;top:431.0px;line-height:13px;">-0,5</div>
<div class="a" style="left:2670px;top:456px;width:5px;height:1px;background:#6f8a96"></div>
<div class="t" style="left:2677px;top:450.0px;line-height:13px;">-1</div>
<div class="a" style="left:2670px;top:476px;width:5px;height:1px;background:#6f8a96"></div>
<div class="t" style="left:2677px;top:469.5px;line-height:13px;">-1,5</div>
<div class="a" style="left:2670px;top:496px;width:5px;height:1px;background:#6f8a96"></div>
<div class="t" style="left:2677px;top:489.0px;line-height:13px;">-2</div>
<div class="a" style="left:2670px;top:418px;width:5px;height:1px;background:#6f8a96"></div>
<div class="a" style="left:2675px;top:410px;width:9px;height:16px;border:1px solid #6f8a96;background:linear-gradient(#f6f8fd,#d3dbf3)"></div>
<div class="t" style="left:2677px;top:411px;line-height:14px;color:#55d055">0</div>
<div class="a" style="left:2670px;top:508px;width:5px;height:1px;background:#6f8a96"></div>
<div class="t" style="left:2677px;top:506.5px;line-height:13px;">4 750</div>
<div class="a" style="left:2670px;top:561px;width:5px;height:1px;background:#6f8a96"></div>
<div class="t" style="left:2677px;top:554.7px;line-height:13px;">4 700</div>
<div class="a" style="left:2670px;top:615px;width:5px;height:1px;background:#6f8a96"></div>
<div class="t" style="left:2677px;top:608.4px;line-height:13px;">4 650</div>
<div class="a" style="left:2670px;top:669px;width:5px;height:1px;background:#6f8a96"></div>
<div class="t" style="left:2677px;top:662.1px;line-height:13px;">4 600</div>
<div class="a" style="left:2670px;top:722px;width:5px;height:1px;background:#6f8a96"></div>
<div class="t" style="left:2677px;top:715.8px;line-height:13px;">4 550</div>
<div class="a" style="left:2670px;top:830px;width:5px;height:1px;background:#6f8a96"></div>
<div class="t" style="left:2677px;top:823.2px;line-height:13px;">4 450</div>
<div class="a" style="left:2670px;top:883px;width:5px;height:1px;background:#6f8a96"></div>
<div class="t" style="left:2677px;top:876.9px;line-height:13px;">4 400</div>
<div class="a" style="left:2670px;top:937px;width:5px;height:1px;background:#6f8a96"></div>
<div class="t" style="left:2677px;top:925.5px;line-height:13px;">4 350</div>
<div class="a" style="left:2670px;top:776px;width:5px;height:1px;background:#6f8a96"></div>
<div class="t" style="left:2677px;top:768px;line-height:16px;font-weight:bold;font-size:13px">4 500</div>
<div class="a" style="left:2676px;top:813px;width:38px;height:17px;background:#f5d020;border:1px solid #b08a00"></div>
<div class="t" style="left:2678px;top:814px;line-height:15px;">4 458,5</div>
<div class="a" style="left:1116px;top:940px;width:1px;height:4px;background:#6f8a96"></div>
<div class="t" style="left:1085.6px;width:60px;text-align:center;top:945px;line-height:13px;">26</div>
<div class="a" style="left:1191px;top:940px;width:1px;height:4px;background:#6f8a96"></div>
<div class="t" style="left:1161.0px;width:60px;text-align:center;top:945px;line-height:13px;">27</div>
<div class="a" style="left:1267px;top:940px;width:1px;height:4px;background:#6f8a96"></div>
<div class="t" style="left:1236.7px;width:60px;text-align:center;top:945px;line-height:13px;">28</div>
<div class="a" style="left:1340px;top:940px;width:1px;height:4px;background:#6f8a96"></div>
<div class="t" style="left:1310.0px;width:60px;text-align:center;top:945px;line-height:13px;">31</div>
<div class="a" style="left:1417px;top:940px;width:1px;height:4px;background:#6f8a96"></div>
<div class="t" style="left:1386.7px;width:60px;text-align:center;top:945px;line-height:13px;font-weight:bold;font-size:12px">sept.</div>
<div class="a" style="left:1493px;top:940px;width:1px;height:4px;background:#6f8a96"></div>
<div class="t" style="left:1463.0px;width:60px;text-align:center;top:945px;line-height:13px;">02</div>
<div class="a" style="left:1569px;top:940px;width:1px;height:4px;background:#6f8a96"></div>
<div class="t" style="left:1539.0px;width:60px;text-align:center;top:945px;line-height:13px;">03</div>
<div class="a" style="left:1644px;top:940px;width:1px;height:4px;background:#6f8a96"></div>
<div class="t" style="left:1614.0px;width:60px;text-align:center;top:945px;line-height:13px;">04</div>
<div class="a" style="left:1720px;top:940px;width:1px;height:4px;background:#6f8a96"></div>
<div class="t" style="left:1690.0px;width:60px;text-align:center;top:945px;line-height:13px;">07</div>
<div class="a" style="left:1796px;top:940px;width:1px;height:4px;background:#6f8a96"></div>
<div class="t" style="left:1765.6px;width:60px;text-align:center;top:945px;line-height:13px;">08</div>
<div class="a" style="left:1871px;top:940px;width:1px;height:4px;background:#6f8a96"></div>
<div class="t" style="left:1841.0px;width:60px;text-align:center;top:945px;line-height:13px;">09</div>
<div class="a" style="left:1947px;top:940px;width:1px;height:4px;background:#6f8a96"></div>
<div class="t" style="left:1916.7px;width:60px;text-align:center;top:945px;line-height:13px;">10</div>
<div class="a" style="left:2023px;top:940px;width:1px;height:4px;background:#6f8a96"></div>
<div class="t" style="left:1993.0px;width:60px;text-align:center;top:945px;line-height:13px;">11</div>
<div class="a" style="left:2097px;top:940px;width:1px;height:4px;background:#6f8a96"></div>
<div class="t" style="left:2066.7px;width:60px;text-align:center;top:945px;line-height:13px;">14</div>
<div class="a" style="left:2172px;top:940px;width:1px;height:4px;background:#6f8a96"></div>
<div class="t" style="left:2142.0px;width:60px;text-align:center;top:945px;line-height:13px;">15</div>
<div class="a" style="left:2248px;top:940px;width:1px;height:4px;background:#6f8a96"></div>
<div class="t" style="left:2218.0px;width:60px;text-align:center;top:945px;line-height:13px;">16</div>
<div class="a" style="left:2324px;top:940px;width:1px;height:4px;background:#6f8a96"></div>
<div class="t" style="left:2294.0px;width:60px;text-align:center;top:945px;line-height:13px;">17</div>
<div class="a" style="left:2400px;top:940px;width:1px;height:4px;background:#6f8a96"></div>
<div class="t" style="left:2370.0px;width:60px;text-align:center;top:945px;line-height:13px;">18</div>
<div class="a" style="left:2474px;top:940px;width:1px;height:4px;background:#6f8a96"></div>
<div class="t" style="left:2444.0px;width:60px;text-align:center;top:945px;line-height:13px;">21</div>
<div class="a" style="left:2550px;top:940px;width:1px;height:4px;background:#6f8a96"></div>
<div class="t" style="left:2520.0px;width:60px;text-align:center;top:945px;line-height:13px;">22</div>
<div class="a" style="left:2626px;top:940px;width:1px;height:4px;background:#6f8a96"></div>
<div class="t" style="left:2595.6px;width:60px;text-align:center;top:945px;line-height:13px;">23</div>
<div class="a" style="left:1054px;top:959px;width:1672px;height:1px;background:#7f98a4"></div>
<div class="a" style="left:1054px;top:960px;width:1672px;height:32px;background:linear-gradient(#b9d6e2,#a3c0cc)"></div>
<svg class="a" style="left:1060px;top:966px" width="19" height="20" viewBox="0 0 19 20"><rect x="0.5" y="3.5" width="15" height="13" fill="#fff" stroke="#2a5ad8" stroke-width="1.2"/><path d="M1.5 15 L5 10 L7 12 L10 7" stroke="#0a0" stroke-width="0.9" fill="none"/><path d="M5 10 L7 12" stroke="#e00" stroke-width="1"/><path d="M4 11 Q6 4 13 4 V1 L18.5 6 L13 10.5 V7.5 Q8 7.5 4 11Z" fill="#4ad04a" stroke="#1a8a1a" stroke-width="0.7"/><path d="M11 15.5 H17 L14 18.5Z" fill="#000" stroke="#fff" stroke-width="0.6"/></svg>
<div class="a" style="left:1083px;top:968px;width:15px;height:16px;border:1px solid #7f9aa6;border-radius:3px;background:linear-gradient(#d8eef7,#b4cfdb)"></div>
<svg class="a" style="left:1087px;top:972px" width="6" height="8"><path d="M5 0V8L0 4Z" fill="#000"/></svg>
<div class="a" style="left:1098px;top:968px;width:1501px;height:16px;border-top:1px solid #8aa2ad;border-bottom:1px solid #8aa2ad;background:linear-gradient(#9fb8c4,#b3ccd7)"></div>
<div class="a" style="left:2085px;top:968px;width:240px;height:15px;border:1px solid #7f9aa6;border-radius:4px;background:linear-gradient(#c7e1ec,#a8c4d0)"></div>
<svg class="a" style="left:2200px;top:972px" width="8" height="7"><path d="M0 1.5H8M0 3.5H8M0 5.5H8" stroke="#6f8a96" stroke-width="0.9"/></svg>
<div class="a" style="left:2599px;top:968px;width:14px;height:16px;border:1px solid #7f9aa6;border-radius:3px;background:linear-gradient(#d8eef7,#b4cfdb)"></div>
<svg class="a" style="left:2603px;top:972px" width="6" height="8"><path d="M0 0V8L5 4Z" fill="#000"/></svg>
<svg class="a" style="left:2619px;top:965px" width="107" height="22" viewBox="0 0 107 22"><path d="M4 9v13M12 1v20" stroke="#333" stroke-width="1"/><rect x="1" y="10" width="6" height="8" fill="#e44" stroke="#333" stroke-width="0.8"/><rect x="9" y="3" width="6" height="15" fill="#3b3" stroke="#333" stroke-width="0.8"/><path d="M2 19 L10 11" stroke="#333" stroke-width="3" stroke-linecap="round"/><path d="M2 19 L10 11" stroke="#fff" stroke-width="1.6" stroke-linecap="round"/><path d="M8 9 Q9 5 13 6 L11 8 L12 10 L14 9 Q14 13 10 12" fill="#fff" stroke="#333" stroke-width="0.7"/><circle cx="34" cy="8" r="5.5" fill="#ddd" stroke="#222" stroke-width="1.4"/><circle cx="32.5" cy="6.5" r="2.3" fill="#fff"/><path d="M38 12 L43 17" stroke="#000" stroke-width="2.8" stroke-linecap="round"/><path d="M42 2v10M40 4l2-2.5 2 2.5M40 10l2 2.5 2-2.5M29 19h10M31 17l-2.5 2 2.5 2M37 17l2.5 2-2.5 2" stroke="#1030e0" stroke-width="1.3" fill="none"/><circle cx="63" cy="7.5" r="5.5" fill="#fff" stroke="#222" stroke-width="1.4"/><path d="M60 7.5h6" stroke="#1030e0" stroke-width="1.6"/><path d="M67 12 L73 18" stroke="#000" stroke-width="2.8" stroke-linecap="round"/><circle cx="91" cy="7.5" r="5.5" fill="#fff" stroke="#222" stroke-width="1.4"/><path d="M88 7.5h6M91 4.5v6" stroke="#1030e0" stroke-width="1.6"/><path d="M95 12 L101 18" stroke="#000" stroke-width="2.8" stroke-linecap="round"/></svg>
<div class="a" style="left:1054px;top:992px;width:1672px;height:1px;background:#7f98a4"></div>
<div class="a" style="left:1054px;top:993px;width:1672px;height:1px;background:#cfe6ef"></div>
<div class="a" style="left:1054px;top:994px;width:1672px;height:22px;background:linear-gradient(#b7d4e0,#cdeaf5)"></div>
<div class="a" style="left:1050px;top:1016px;width:1680px;height:4px;background:#9cb9c6"></div>
<div class="t" style="left:1060px;top:999px;line-height:13px;">Graphique ProOrder (uniquement pour voir les résultats de ce système de trading)</div>
<svg class="a" style="left:2513px;top:997px" width="14" height="13" viewBox="0 0 14 13"><rect x="1" y="2" width="11" height="9" rx="1.5" fill="#fff" stroke="#2a5ad8" stroke-width="1.3"/><path d="M2 8 L5 6 L7 8 L11 4" stroke="#e22" stroke-width="1.2" fill="none"/><path d="M7 8 L11 4" stroke="#0a0" stroke-width="1.2"/></svg>
<div class="t" style="left:2531px;top:999px;line-height:13px;"><span class="lk">France 40 au comptant (Mini-contrat (-)</span></div>
<div class="a" style="left:2545px;top:1003px;width:98px;height:18px;border:1px solid #767676;border-radius:3px;background:linear-gradient(#ffffff,#e4e5f0);box-shadow:1px 1px 2px rgba(0,0,0,0.3)"></div>
<div class="t" style="left:2550px;top:1005px;line-height:14px;color:#575757">UC utilisée : 16%</div>
<div class="a" style="left:1050px;top:1020px;width:1680px;height:30px;background:linear-gradient(#6f8299,#8193ac 15%,#8a9bb3);border-top:1px solid #3d4d60"></div>
<div class="a" style="left:1110px;top:1021px;width:98px;height:29px;border:1px solid #56667b;border-radius:3px;background:linear-gradient(#a8b5c6,#95a5ba 50%,#8797ae 51%,#8f9fb5);box-shadow:inset 0 1px 0 rgba(255,255,255,0.35)"></div>
<svg class="a" style="left:1117px;top:1027px" width="16" height="16" viewBox="0 0 16 16"><rect x="0.5" y="0.5" width="15" height="15" rx="3" fill="#555"/><path d="M3 5 L8 8 L3 11 M13 4 L7 8 L13 12" stroke="#fff" stroke-width="2" fill="none"/></svg>
<div class="t" style="left:1137px;top:1028px;line-height:15px;font-size:11.5px;color:#fff">877270: X...</div>
<div class="a" style="left:1212px;top:1021px;width:98px;height:29px;border:1px solid #56667b;border-radius:3px;background:linear-gradient(#a8b5c6,#95a5ba 50%,#8797ae 51%,#8f9fb5);box-shadow:inset 0 1px 0 rgba(255,255,255,0.35)"></div>
<svg class="a" style="left:1219px;top:1027px" width="16" height="16" viewBox="0 0 16 16"><rect x="0.5" y="0.5" width="15" height="15" rx="2" fill="#3a3a3a"/><text x="8" y="11.5" font-size="7" font-family="Liberation Sans" font-weight="bold" fill="#fff" text-anchor="middle">JFD</text></svg>
<div class="t" style="left:1239px;top:1028px;line-height:15px;font-size:11.5px;color:#fff">150532: JF...</div>
<div class="a" style="left:1314px;top:1021px;width:93px;height:29px;border:1px solid #56667b;border-radius:3px;background:linear-gradient(#a8b5c6,#95a5ba 50%,#8797ae 51%,#8f9fb5);box-shadow:inset 0 1px 0 rgba(255,255,255,0.35)"></div>
<svg class="a" style="left:1321px;top:1027px" width="16" height="16" viewBox="0 0 16 16"><circle cx="8" cy="8" r="7.5" fill="#db4437"/><path d="M8 8 L1.5 4.5 A7.5 7.5 0 0 0 8 15.5Z" fill="#0f9d58"/><path d="M8 8 L8 15.5 A7.5 7.5 0 0 0 14.5 4.5Z" fill="#f4c20d"/><circle cx="8" cy="8" r="3.6" fill="#fff"/><circle cx="8" cy="8" r="2.7" fill="#4285f4"/></svg>
<div class="t" style="left:1341px;top:1028px;line-height:15px;font-size:11.5px;color:#fff">Google C...</div>
<div class="a" style="left:1409px;top:1022px;width:2px;height:27px;background:linear-gradient(90deg,#56667b,#b8c4d2)"></div>
<div class="a" style="left:1412px;top:1021px;width:43px;height:29px;border:1px solid #56667b;border-radius:3px;background:linear-gradient(#a8b5c6,#95a5ba 50%,#8797ae 51%,#8f9fb5);box-shadow:inset 0 1px 0 rgba(255,255,255,0.35)"></div>
<svg class="a" style="left:1426px;top:1027px" width="16" height="16" viewBox="0 0 16 16"><rect x="1" y="2" width="9" height="8" fill="#8fd0e8" stroke="#5a9" stroke-width="0.8"/><rect x="6" y="6" width="9" height="9" fill="#f6e06a" stroke="#b9a030" stroke-width="0.8"/></svg>
<div class="a" style="left:1457px;top:1021px;width:97px;height:29px;border:1px solid #56667b;border-radius:3px;background:linear-gradient(#a8b5c6,#95a5ba 50%,#8797ae 51%,#8f9fb5);box-shadow:inset 0 1px 0 rgba(255,255,255,0.35)"></div>
<svg class="a" style="left:1464px;top:1027px" width="16" height="16" viewBox="0 0 16 16"><rect x="0.5" y="0.5" width="15" height="15" fill="#bf1f1f"/><text x="8" y="12.5" font-size="11" font-family="Liberation Sans" font-weight="bold" font-style="italic" fill="#fff" text-anchor="middle">Fz</text></svg>
<div class="t" style="left:1484px;top:1028px;line-height:15px;font-size:11.5px;color:#fff">VideoBour...</div>
<div class="a" style="left:1558px;top:1021px;width:98px;height:29px;border:1px solid #56667b;border-radius:3px;background:linear-gradient(#a8b5c6,#95a5ba 50%,#8797ae 51%,#8f9fb5);box-shadow:inset 0 1px 0 rgba(255,255,255,0.35)"></div>
<svg class="a" style="left:1565px;top:1027px" width="16" height="16" viewBox="0 0 16 16"><rect x="3" y="1" width="12" height="9" fill="#333" stroke="#ccc" stroke-width="0.8"/><path d="M4 7 L7 4 L9 6 L12 3" stroke="#3f3" stroke-width="1" fill="none"/><rect x="1" y="11" width="8" height="4" fill="#bbb"/></svg>
<div class="t" style="left:1585px;top:1028px;line-height:15px;font-size:11.5px;color:#fff">Gestionna...</div>
<div class="a" style="left:1661px;top:1021px;width:98px;height:29px;border:1px solid #56667b;border-radius:3px;background:linear-gradient(#a8b5c6,#95a5ba 50%,#8797ae 51%,#8f9fb5);box-shadow:inset 0 1px 0 rgba(255,255,255,0.35)"></div>
<svg class="a" style="left:1668px;top:1027px" width="16" height="16" viewBox="0 0 16 16"><rect x="0.5" y="0.5" width="15" height="15" rx="2" fill="#3a3a3a"/><text x="8" y="11.5" font-size="7" font-family="Liberation Sans" font-weight="bold" fill="#fff" text-anchor="middle">JFD</text></svg>
<div class="t" style="left:1688px;top:1028px;line-height:15px;font-size:11.5px;color:#fff">26006: JFD...</div>
<div class="a" style="left:1762px;top:1021px;width:98px;height:29px;border:1px solid #56667b;border-radius:3px;background:linear-gradient(#a8b5c6,#95a5ba 50%,#8797ae 51%,#8f9fb5);box-shadow:inset 0 1px 0 rgba(255,255,255,0.35)"></div>
<svg class="a" style="left:1769px;top:1027px" width="16" height="16" viewBox="0 0 16 16"><rect x="0.5" y="0.5" width="15" height="15" rx="2" fill="#3a3a3a"/><text x="8" y="11.5" font-size="7" font-family="Liberation Sans" font-weight="bold" fill="#fff" text-anchor="middle">JFD</text></svg>
<div class="t" style="left:1789px;top:1028px;line-height:15px;font-size:11.5px;color:#fff">26007: JFD...</div>
<div class="a" style="left:1864px;top:1021px;width:99px;height:29px;border:1px solid #56667b;border-radius:3px;background:linear-gradient(#a8b5c6,#95a5ba 50%,#8797ae 51%,#8f9fb5);box-shadow:inset 0 1px 0 rgba(255,255,255,0.35)"></div>
<svg class="a" style="left:1871px;top:1027px" width="16" height="16" viewBox="0 0 16 16"><rect x="0.5" y="0.5" width="15" height="15" fill="#4a5a12" stroke="#9fc020"/><text x="8" y="11.5" font-size="8" font-family="Liberation Sans" font-weight="bold" fill="#d4f040" text-anchor="middle">Dw</text></svg>
<div class="t" style="left:1891px;top:1028px;line-height:15px;font-size:11.5px;color:#fff">Adobe Dr...</div>
<div class="a" style="left:1966px;top:1021px;width:98px;height:29px;border:1px solid #56667b;border-radius:3px;background:linear-gradient(#a8b5c6,#95a5ba 50%,#8797ae 51%,#8f9fb5);box-shadow:inset 0 1px 0 rgba(255,255,255,0.35)"></div>
<svg class="a" style="left:1973px;top:1027px" width="16" height="16" viewBox="0 0 16 16"><path d="M1 3 H6 L7 5 H15 V14 H1Z" fill="#f0c850" stroke="#b08a20" stroke-width="0.8"/><rect x="4" y="2" width="4" height="12" fill="#fff3c0"/></svg>
<div class="t" style="left:1993px;top:1028px;line-height:15px;font-size:11.5px;color:#fff">H:\PRIVA...</div>
<div class="a" style="left:2068px;top:1021px;width:97px;height:29px;border:1px solid #56667b;border-radius:3px;background:linear-gradient(#a8b5c6,#95a5ba 50%,#8797ae 51%,#8f9fb5);box-shadow:inset 0 1px 0 rgba(255,255,255,0.35)"></div>
<svg class="a" style="left:2075px;top:1027px" width="16" height="16" viewBox="0 0 16 16"><circle cx="8" cy="8" r="7" fill="#1e9ee0"/><text x="8" y="12" font-size="11" font-family="Liberation Sans" font-weight="bold" fill="#fff" text-anchor="middle">S</text></svg>
<div class="t" style="left:2095px;top:1028px;line-height:15px;font-size:11.5px;color:#fff">Skype™ [4...</div>
<div class="a" style="left:2169px;top:1021px;width:90px;height:29px;border:1px solid #56667b;border-radius:3px;background:linear-gradient(#d3dde8,#aebfd2 50%,#9db0c7 51%,#aabdd2);box-shadow:inset 0 1px 0 rgba(255,255,255,0.35)"></div>
<svg class="a" style="left:2176px;top:1027px" width="16" height="17" viewBox="0 0 16 17"><line x1="3.5" y1="5" x2="3.5" y2="16" stroke="#111"/><rect x="1.5" y="8.5" width="4" height="5" fill="#6b7378" stroke="#111"/><line x1="11.5" y1="0" x2="11.5" y2="17" stroke="#3a9a10"/><rect x="9.5" y="4.5" width="5" height="8" fill="#8ee81c" stroke="#3a9a10"/></svg>
<div class="t" style="left:2196px;top:1028px;line-height:15px;font-size:11.5px;color:#fff">Java(TM)...</div>
<div class="a" style="left:2262px;top:1022px;width:2px;height:27px;background:linear-gradient(90deg,#56667b,#b8c4d2)"></div>
<svg class="a" style="left:1058px;top:1014px" width="38" height="38" viewBox="0 0 38 38"><defs><radialGradient id="orb" cx="50%" cy="85%" r="70%"><stop offset="0" stop-color="#2fd0f0"/><stop offset="0.45" stop-color="#1a6fb0"/><stop offset="1" stop-color="#0c3a68"/></radialGradient></defs><circle cx="19" cy="19" r="18" fill="url(#orb)" stroke="#1b3c5c" stroke-width="1"/><ellipse cx="19" cy="11" rx="14" ry="8" fill="#fff" opacity="0.25"/><path d="M9 12 Q13 9.5 17.5 11.5 L16.5 18 Q12 16 8 18.5Z" fill="#f05a22"/><path d="M19 11.5 Q23.5 13.5 28.5 11 L27.5 17.5 Q22.5 20 18 18Z" fill="#8cc63e"/><path d="M8 20 Q12 17.5 16.5 19.5 L15.5 26 Q11 24 7 26.5Z" fill="#1fa0e0"/><path d="M18 19.5 Q22.5 21.5 27.5 19 L26.5 25.5 Q21.5 28 17 26Z" fill="#fcc20e"/></svg>
<svg class="a" style="left:2275px;top:1028px" width="16" height="17" viewBox="0 0 16 17"><line x1="3.5" y1="5" x2="3.5" y2="16" stroke="#111"/><rect x="1.5" y="8.5" width="4" height="5" fill="#6b7378" stroke="#111"/><line x1="11.5" y1="0" x2="11.5" y2="17" stroke="#3a9a10"/><rect x="9.5" y="4.5" width="5" height="8" fill="#8ee81c" stroke="#3a9a10"/></svg>
<svg class="a" style="left:2300px;top:1028px" width="16" height="17" viewBox="0 0 16 17"><rect x="1" y="2" width="6" height="6" fill="#fff"/><rect x="9" y="2" width="6" height="6" fill="#fff"/><rect x="1" y="9" width="6" height="6" fill="#fff"/><rect x="9" y="9" width="6" height="6" fill="#fff"/><path d="M1 8.5h14M8 2v13" stroke="#557" stroke-width="0.6"/></svg>
<svg class="a" style="left:2325px;top:1028px" width="16" height="17" viewBox="0 0 16 17"><path d="M2 12 Q6 2 14 3 L12 8 Q8 8 6 14Z" fill="#e06020"/><path d="M3 13 L13 4" stroke="#fff" stroke-width="1"/><circle cx="5" cy="12" r="3" fill="#3070c0"/></svg>
<svg class="a" style="left:2348px;top:1028px" width="16" height="17" viewBox="0 0 16 17"><circle cx="8" cy="8" r="7.5" fill="#db4437"/><path d="M8 8 L1.5 4.5 A7.5 7.5 0 0 0 8 15.5Z" fill="#0f9d58"/><path d="M8 8 L8 15.5 A7.5 7.5 0 0 0 14.5 4.5Z" fill="#f4c20d"/><circle cx="8" cy="8" r="3.6" fill="#fff"/><circle cx="8" cy="8" r="2.7" fill="#4285f4"/></svg>
<svg class="a" style="left:2372px;top:1028px" width="16" height="17" viewBox="0 0 16 17"><circle cx="7" cy="8" r="6.5" fill="#7cc040"/><circle cx="10" cy="11" r="5" fill="#f0b000" stroke="#805000" stroke-width="0.6"/><text x="10" y="14" font-size="7" font-family="Liberation Sans" text-anchor="middle">4</text></svg>
<svg class="a" style="left:2396px;top:1028px" width="16" height="17" viewBox="0 0 16 17"><rect x="1" y="1" width="14" height="14" fill="#c81414"/><path d="M3 13 Q8 3 8 2 Q9 6 13 12 Q8 9 3 13Z" stroke="#fff" stroke-width="1" fill="none"/></svg>
<svg class="a" style="left:2420px;top:1028px" width="16" height="17" viewBox="0 0 16 17"><rect x="1" y="1" width="14" height="14" fill="#b81818"/><path d="M4 12 L8 3 L12 12 M6 9 H10" stroke="#fff" stroke-width="1.4" fill="none"/></svg>
<svg class="a" style="left:2444px;top:1028px" width="16" height="17" viewBox="0 0 16 17"><rect x="2" y="5" width="12" height="10" fill="#40b040"/><path d="M4 10 L7 13 L14 2" stroke="#fff" stroke-width="2" fill="none"/><path d="M4 10 L7 13 L14 2" stroke="#085" stroke-width="0.6" fill="none"/></svg>
<svg class="a" style="left:2467px;top:1028px" width="16" height="17" viewBox="0 0 16 17"><rect x="1" y="3" width="14" height="11" fill="#e6c448" stroke="#9a7a10" stroke-width="0.7"/><rect x="3" y="5" width="10" height="5" fill="#5090d0"/></svg>
<svg class="a" style="left:2491px;top:1028px" width="16" height="17" viewBox="0 0 16 17"><circle cx="8" cy="6" r="5" fill="#d8e8d8" stroke="#487848" stroke-width="1"/><path d="M5 6 L7 8 L11 4" stroke="#287828" stroke-width="1.4" fill="none"/><path d="M5 10 L3 15 L6 13 L8 15 L8 11" fill="#40a060"/></svg>
<svg class="a" style="left:2515px;top:1028px" width="16" height="17" viewBox="0 0 16 17"><rect x="2" y="2" width="6" height="10" fill="#a0a8b0" stroke="#556" stroke-width="0.6"/><circle cx="11" cy="11" r="4.5" fill="#20a020"/><path d="M9 11 L10.5 12.5 L13 9.5" stroke="#fff" stroke-width="1.2" fill="none"/></svg>
<svg class="a" style="left:2539px;top:1028px" width="16" height="17" viewBox="0 0 16 17"><rect x="2" y="1" width="12" height="14" fill="#e8eef0"/><rect x="3" y="2" width="10" height="12" fill="#10c010"/><path d="M3 3.5h10M3 5.5h10M3 7.5h10M3 9.5h10M3 11.5h10M4.5 2v12M6.5 2v12M8.5 2v12M10.5 2v12" stroke="#003000" stroke-width="0.8"/></svg>
<svg class="a" style="left:2564px;top:1028px" width="16" height="17" viewBox="0 0 16 17"><path d="M3 1 V15" stroke="#fff" stroke-width="1.3"/><path d="M3.5 2 Q8 0 10 3 Q12 5 14 4 V9 Q11 10 9 8 Q7 6 3.5 8Z" fill="#f4f4f4"/><circle cx="11" cy="11" r="4" fill="#e02020"/><path d="M9.2 9.2 L12.8 12.8 M12.8 9.2 L9.2 12.8" stroke="#fff" stroke-width="1.2"/></svg>
<svg class="a" style="left:2587px;top:1028px" width="16" height="17" viewBox="0 0 16 17"><path d="M2 1 V10 M1 1 V4 M3 1 V4" stroke="#fff" stroke-width="0.9"/><rect x="5" y="3" width="10" height="8" fill="#607080" stroke="#fff" stroke-width="1"/><path d="M7 14 H13 M10 11 V14" stroke="#fff" stroke-width="1.2"/></svg>
<svg class="a" style="left:2611px;top:1028px" width="16" height="17" viewBox="0 0 16 17"><path d="M2 6 H5 L9 2 V14 L5 10 H2Z" fill="#f0f0f0" stroke="#555" stroke-width="0.6"/><path d="M11 5 Q13 8 11 11 M13 3 Q16 8 13 13" stroke="#f0f0f0" stroke-width="1.2" fill="none"/></svg>
<div class="a" style="left:2538px;top:1024px;width:1px;height:24px;background:#5f6f84"></div>
<div class="a" style="left:2539px;top:1024px;width:1px;height:24px;background:#a9b7c8"></div>
<div class="a" style="left:2560px;top:1024px;width:1px;height:24px;background:#5f6f84"></div>
<div class="a" style="left:2561px;top:1024px;width:1px;height:24px;background:#a9b7c8"></div>
<div class="t" style="left:2662px;top:1028px;line-height:15px;color:#fff;font-size:12px">21:41</div>
<div class="a" style="left:2716px;top:1021px;width:13px;height:29px;border:1px solid #4a5a6e;border-radius:2px;background:linear-gradient(90deg,#7f90a8,#9aaabf)"></div>
</body></html>
